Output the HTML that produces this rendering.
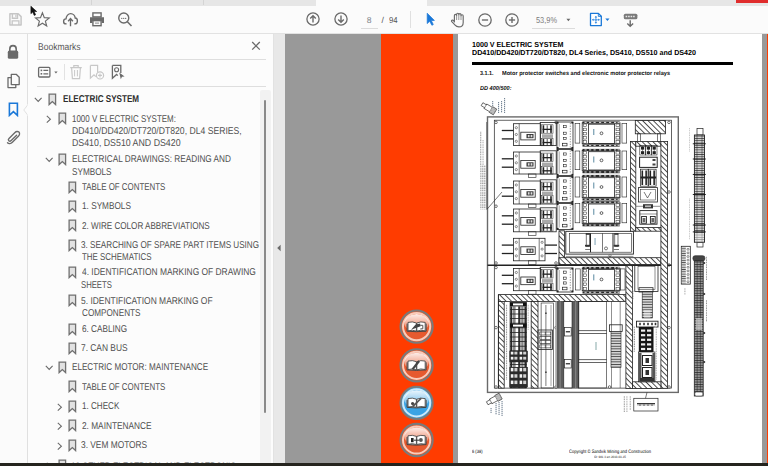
<!DOCTYPE html>
<html><head><meta charset="utf-8"><style>
html,body{margin:0;padding:0;width:768px;height:466px;overflow:hidden;background:#fbfbfb;font-family:"Liberation Sans", sans-serif}
.r,.t,.ic{position:absolute;display:block}
.t{white-space:nowrap;transform-origin:0 0;text-rendering:geometricPrecision}
#bm{position:absolute;left:0;top:87px;width:260px;height:376px;overflow:hidden}
#bmi{position:absolute;left:0;top:-87px}
</style></head><body>
<div class="r" style="left:0;top:0;width:768px;height:5.5px;background:#e6e6e6"></div><div class="r" style="left:91px;top:0;width:1px;height:5px;background:#d4d4d4"></div><div class="r" style="left:203px;top:0;width:1px;height:5px;background:#d4d4d4"></div><div class="r" style="left:316px;top:0;width:111px;height:6px;background:#fbfbfb"></div><div class="r" style="left:736px;top:0;width:32px;height:2.5px;background:#e02c2c"></div><div class="r" style="left:0;top:5.5px;width:768px;height:28px;background:#fbfbfb"></div><div class="r" style="left:0;top:33px;width:768px;height:1px;background:#e2e2e2"></div><svg class="ic" style="left:8px;top:12px" width="15" height="15" viewBox="0 0 15 15"><path d="M1.9 1.7H10.2L13.1 4.6V13.1H1.9Z" fill="none" stroke="#c6c6c6" stroke-width="1.5" stroke-linejoin="round"/><path d="M4.4 1.7V6.3H9.5V1.7" fill="none" stroke="#c6c6c6" stroke-width="1.4"/><rect x="7.3" y="2.6" width="1.2" height="2.6" fill="#c6c6c6"/><path d="M4.2 13.1V8.8H10.9V13.1" fill="none" stroke="#c6c6c6" stroke-width="1.3"/></svg><svg class="ic" style="left:34px;top:11px" width="17" height="17" viewBox="0 0 17 17"><path d="M8.4 1.8L10.3 6.6L15.3 6.9L11.4 10.1L12.7 15.0L8.4 12.3L4.1 15.0L5.4 10.1L1.5 6.9L6.5 6.6Z" fill="none" stroke="#6a6a6a" stroke-width="1.15" stroke-linejoin="miter"/></svg><svg class="ic" style="left:30px;top:5px" width="9" height="12" viewBox="0 0 9 12"><path d="M0.9 1.2L0.9 8.7L2.7 7.0L4.2 10.4L5.6 9.8L4.2 6.5L6.7 6.5Z" fill="#111" stroke="#111" stroke-width="0.6" stroke-linejoin="round"/></svg><svg class="ic" style="left:62px;top:11px" width="17" height="17" viewBox="0 0 17 17"><path d="M4.6 12.9H4.0C2.6 12.9 1.6 11.8 1.6 10.4C1.6 9.0 2.6 7.9 4.0 7.9C4.2 5.0 6.3 2.6 8.7 2.6C11.1 2.6 13.0 4.6 13.2 7.0C14.6 7.1 15.4 8.5 15.4 9.9C15.4 11.5 14.3 12.9 12.8 12.9H12.3" fill="none" stroke="#6a6a6a" stroke-width="1.35"/><path d="M8.5 15.2V7.8M6.1 10.2L8.5 7.6L10.9 10.2" fill="none" stroke="#6a6a6a" stroke-width="1.35"/></svg><svg class="ic" style="left:89px;top:11px" width="16" height="16" viewBox="0 0 16 16"><rect x="3.9" y="1.9" width="8.2" height="4" fill="none" stroke="#6a6a6a" stroke-width="1.4"/><path d="M1 6.2H15V12H12.6V9.9H3.4V12H1Z" fill="#6a6a6a"/><rect x="3.9" y="9.6" width="8.2" height="5.1" fill="#fbfbfb" stroke="#6a6a6a" stroke-width="1.4"/><rect x="6" y="11.4" width="4" height="1.5" fill="#b0b0b0"/></svg><svg class="ic" style="left:116px;top:11px" width="18" height="18" viewBox="0 0 18 18"><circle cx="7.75" cy="7.0" r="5.0" fill="none" stroke="#6a6a6a" stroke-width="1.4"/><path d="M11.4 10.7L15.5 15" stroke="#6a6a6a" stroke-width="1.5"/><circle cx="5.8" cy="7.3" r="0.65" fill="#555"/><circle cx="7.75" cy="7.3" r="0.65" fill="#555"/><circle cx="9.7" cy="7.3" r="0.65" fill="#555"/></svg><svg class="ic" style="left:305.2px;top:11.3px" width="16" height="16" viewBox="0 0 16 16"><circle cx="8" cy="8" r="6.1" fill="none" stroke="#6a6a6a" stroke-width="1.3"/><path d="M8 11.6V4.8M5.2 7.5L8 4.7L10.8 7.5" fill="none" stroke="#6a6a6a" stroke-width="1.4"/></svg><svg class="ic" style="left:332.5px;top:11.3px" width="16" height="16" viewBox="0 0 16 16"><circle cx="8" cy="8" r="6.1" fill="none" stroke="#6a6a6a" stroke-width="1.3"/><path d="M8 4.4V11.2M5.2 8.5L8 11.3L10.8 8.5" fill="none" stroke="#6a6a6a" stroke-width="1.4"/></svg><div class="t" style="left:366.8px;top:14.9px;font-size:8.6px;line-height:10px;color:#7a7f88">8</div><div class="r" style="left:360.5px;top:28px;width:17.5px;height:1px;background:#dcdcdc"></div><div class="t" style="left:381.6px;top:14.9px;font-size:8.6px;line-height:10px;color:#555">/</div><div class="t" style="left:389px;top:14.9px;font-size:8.6px;line-height:10px;color:#555;transform:scaleX(0.9)">94</div><div class="r" style="left:409.5px;top:11px;width:1px;height:16.5px;background:#e0e0e0"></div><svg class="ic" style="left:426px;top:12px" width="10" height="15" viewBox="0 0 10 15"><path d="M1.2 1.2V11.6L3.7 9.3L5.9 13.3L7.3 12.5L5.3 8.6L8.4 8.4Z" fill="#1a78d8" stroke="#1a78d8" stroke-width="0.7" stroke-linejoin="round"/></svg><svg class="ic" style="left:449.5px;top:11.5px" width="16" height="16" viewBox="0 0 16 16"><path d="M4.4 10.0V3.5Q4.4 2.3 5.5 2.3Q6.6 2.3 6.6 3.5V2.4Q6.6 1.2 7.7 1.2Q8.8 1.2 8.8 2.4V2.7Q8.8 1.6 9.9 1.6Q11 1.6 11 2.7V3.7Q11 2.7 12.1 2.7Q13.2 2.7 13.2 3.9V10.4Q13.2 14.9 8.9 14.9Q6.5 14.9 5.1 13.2L1.8 9.7Q1.1 8.9 1.9 8.3Q2.7 7.7 3.5 8.5Z" fill="#fbfbfb" stroke="#6a6a6a" stroke-width="1.15" stroke-linejoin="round"/><path d="M6.6 3.4V8M8.8 2.6V8M11 3.6V8" stroke="#8a8a8a" stroke-width="0.9"/></svg><svg class="ic" style="left:476.5px;top:11.5px" width="16" height="16" viewBox="0 0 16 16"><circle cx="8" cy="8" r="6.2" fill="none" stroke="#6a6a6a" stroke-width="1.3"/><path d="M4.9 8H11.1" stroke="#6a6a6a" stroke-width="1.4"/></svg><svg class="ic" style="left:504.0px;top:11.5px" width="16" height="16" viewBox="0 0 16 16"><circle cx="8" cy="8" r="6.2" fill="none" stroke="#6a6a6a" stroke-width="1.3"/><path d="M4.9 8H11.1" stroke="#6a6a6a" stroke-width="1.4"/><path d="M8 4.9V11.1" stroke="#6a6a6a" stroke-width="1.4"/></svg><div class="t" style="left:536.4px;top:14.9px;font-size:8.6px;line-height:10px;color:#7a7a7a;transform:scaleX(0.86)">53,9%</div><svg class="ic" style="left:566px;top:18px" width="5" height="4" viewBox="0 0 5 4"><path d="M0.4 0.8H4.4L2.4 3.2Z" fill="#6a6a6a"/></svg><div class="r" style="left:532px;top:27.8px;width:43px;height:1px;background:#dcdcdc"></div><svg class="ic" style="left:588.5px;top:11.5px" width="14" height="15" viewBox="0 0 14 15"><path d="M1.5 1.4H9.4L12.3 4.3V13.6H1.5Z" fill="#fff" stroke="#1a78d8" stroke-width="1.3" stroke-linejoin="round"/><path d="M9.3 1.4V4.4H12.3" fill="none" stroke="#1a78d8" stroke-width="0.9"/><path d="M6.9 4.2V11.4M3.3 7.8H10.5" stroke="#5aa0e8" stroke-width="0.9"/><path d="M5.6 5.4L6.9 4L8.2 5.4ZM5.6 10.2L6.9 11.6L8.2 10.2ZM4.5 6.5L3.1 7.8L4.5 9.1ZM9.3 6.5L10.7 7.8L9.3 9.1Z" fill="#1a78d8"/><circle cx="6.9" cy="7.8" r="1.1" fill="#5aa0e8"/></svg><svg class="ic" style="left:604.5px;top:18px" width="5" height="4" viewBox="0 0 5 4"><path d="M0.3 0.6H4.5L2.4 3.0Z" fill="#1a78d8"/></svg><svg class="ic" style="left:622.5px;top:12.5px" width="15" height="15" viewBox="0 0 15 15"><rect x="0.8" y="0.7" width="13.6" height="5.6" rx="1.6" fill="#7a7a7a"/><path d="M2.6 3.5H12.6" stroke="#e8e8e8" stroke-width="1.3" stroke-dasharray="1.6 0.9"/><path d="M7.2 7.2V13.2M4.3 10.6L7.2 13.4L10.1 10.6" fill="none" stroke="#6a6a6a" stroke-width="1.4"/></svg><div class="r" style="left:0;top:34px;width:27px;height:429px;background:#fbfbfb"></div><div class="r" style="left:27px;top:34px;width:1px;height:429px;background:#e0e0e0"></div><svg class="ic" style="left:6px;top:44px" width="14" height="16" viewBox="0 0 14 16"><path d="M3.8 7V4.9C3.8 3.0 5.2 1.6 7 1.6C8.8 1.6 10.2 3.0 10.2 4.9V7" fill="none" stroke="#6a6a6a" stroke-width="1.6"/><rect x="1.8" y="6.6" width="10.4" height="8.2" rx="1.6" fill="#6a6a6a"/></svg><svg class="ic" style="left:6px;top:73px" width="15" height="16" viewBox="0 0 15 16"><path d="M5.3 1.3H10.2L13.2 4.3V11.6H5.3Z" fill="none" stroke="#6a6a6a" stroke-width="1.3" stroke-linejoin="round"/><path d="M5.3 4.6H2.0V14.6H9.8V11.6" fill="none" stroke="#6a6a6a" stroke-width="1.3" stroke-linejoin="round"/></svg><svg class="ic" style="left:8px;top:102px" width="11" height="15" viewBox="0 0 11 15"><path d="M1.4 1.3H9.4V13.4L5.4 9.7L1.4 13.4Z" fill="none" stroke="#1a78d8" stroke-width="1.6" stroke-linejoin="miter"/></svg><svg class="ic" style="left:23px;top:104px" width="6" height="12" viewBox="0 0 6 12"><path d="M5 0.5L0.8 6L5 11.5" fill="#fcfcfc" stroke="#dedede" stroke-width="0.9"/><rect x="4.6" y="0" width="2" height="12" fill="#fcfcfc"/></svg><svg class="ic" style="left:6px;top:130px" width="15" height="15" viewBox="0 0 15 15"><path d="M10.6 5.2L5.2 10.6C4.4 11.4 3.4 11.4 2.8 10.8C2.2 10.2 2.2 9.2 3.0 8.4L9.0 2.4C10.2 1.2 12.0 1.2 12.9 2.1C13.8 3.0 13.8 4.8 12.6 6.0L6.4 12.2C4.8 13.8 2.6 13.9 1.5 12.8" fill="none" stroke="#6a6a6a" stroke-width="1.35" stroke-linecap="round"/></svg><div class="r" style="left:28px;top:34px;width:245px;height:429px;background:#fcfcfc"></div><div class="t" style="left:37.5px;top:41.6px;font-size:9.8px;line-height:11px;color:#585858;transform:scaleX(0.87)">Bookmarks</div><svg class="ic" style="left:250px;top:40px" width="12" height="12" viewBox="0 0 12 12"><path d="M2.2 2.0L9.8 9.6M9.8 2.0L2.2 9.6" stroke="#6a6a6a" stroke-width="1.3"/></svg><div class="r" style="left:37px;top:59px;width:229px;height:1px;background:#dedede"></div><div class="r" style="left:37px;top:86px;width:229px;height:1px;background:#dedede"></div><svg class="ic" style="left:37px;top:66px" width="22" height="13" viewBox="0 0 22 13"><rect x="1.6" y="1.4" width="11.3" height="9.6" rx="1" fill="none" stroke="#6a6a6a" stroke-width="1.3"/><rect x="3.6" y="3.6" width="1.6" height="1.6" fill="#6a6a6a"/><rect x="3.6" y="7.0" width="1.6" height="1.6" fill="#6a6a6a"/><path d="M6.4 4.4H11.2M6.4 7.8H11.2" stroke="#6a6a6a" stroke-width="1.2"/><path d="M17.3 5.5H20.6L18.95 7.6Z" fill="#6a6a6a"/></svg><div class="r" style="left:63.5px;top:64px;width:1px;height:16px;background:#e2e2e2"></div><svg class="ic" style="left:69px;top:64px" width="14" height="16" viewBox="0 0 14 16"><path d="M1.2 3.6H12.8M4.8 3.4V1.6H9.2V3.4" fill="none" stroke="#c8c8c8" stroke-width="1.2"/><path d="M2.6 3.8L3.4 14.6H10.6L11.4 3.8" fill="none" stroke="#c8c8c8" stroke-width="1.2"/><path d="M5.6 6V12.4M8.4 6V12.4" stroke="#c8c8c8" stroke-width="1"/></svg><svg class="ic" style="left:89px;top:64px" width="16" height="16" viewBox="0 0 16 16"><path d="M1.4 1.4H8.6V8.4M1.4 1.4V14.2L5.0 10.8L6.8 12.6" fill="none" stroke="#c8c8c8" stroke-width="1.2"/><circle cx="11" cy="11.4" r="3.6" fill="#fcfcfc" stroke="#c8c8c8" stroke-width="1.2"/><path d="M11 9.4V13.4M9 11.4H13" stroke="#c8c8c8" stroke-width="1.1"/></svg><svg class="ic" style="left:111px;top:64px" width="15" height="16" viewBox="0 0 15 16"><path d="M1.4 1.4H9.8V9M1.4 1.4V14.2L5.6 10.4L6.8 11.6" fill="none" stroke="#6a6a6a" stroke-width="1.3"/><circle cx="5.6" cy="5.8" r="2" fill="none" stroke="#6a6a6a" stroke-width="1.1"/><path d="M8.2 8.6L13.6 12.6L11.0 12.8L9.8 15.2Z" fill="#6a6a6a"/></svg><div class="r" style="left:260px;top:89.5px;width:11px;height:373.5px;background:#f2f2f2;border-radius:2px 2px 0 0"></div><div class="r" style="left:263.6px;top:100px;width:2.4px;height:313px;background:#8a8a8a;border-radius:1px"></div><div class="r" style="left:273px;top:34px;width:12px;height:429px;background:#e8e8e8"></div><div class="r" style="left:273px;top:34px;width:1px;height:429px;background:#e2e2e2"></div><svg class="ic" style="left:276px;top:244px" width="6" height="8" viewBox="0 0 6 8"><path d="M4.6 0.8L1.2 4L4.6 7.2Z" fill="#6a6a6a"/></svg><div class="r" style="left:285px;top:34px;width:96px;height:429px;background:#999"></div><div class="r" style="left:381px;top:34px;width:72px;height:429px;background:#ff3c00"></div><div class="r" style="left:453px;top:34px;width:4.5px;height:429px;background:#999"></div><div class="r" style="left:457.5px;top:34px;width:304.5px;height:429px;background:#fff"></div><div class="r" style="left:762px;top:34px;width:5px;height:429px;background:#999"></div><div class="r" style="left:767px;top:34px;width:1px;height:429px;background:#ff3c00"></div><div class="r" style="left:0;top:463px;width:768px;height:3px;background:#25241e"></div>
<div id="bm"><div id="bmi"><svg class="ic" style="left:34.4px;top:97.1px" width="9" height="6" viewBox="0 0 9 6"><path d="M0.8 0.8L4.2 4.4L7.6 0.8" fill="none" stroke="#6a6a6a" stroke-width="1.1"/></svg><svg class="ic" style="left:47.6px;top:93.0px" width="9" height="13" viewBox="0 0 9 13"><path d="M1.1 1.1H7.6V11.6L4.35 8.6L1.1 11.6Z" fill="#e2e2e2" stroke="#707070" stroke-width="1.3" stroke-linejoin="miter"/></svg><div class="t" style="left:62.80px;top:94.44px;font-size:9.9px;line-height:11.058px;color:#2e2e2e;font-weight:bold;font-style:normal;transform:scale(0.8207,1.0);">ELECTRIC SYSTEM</div><svg class="ic" style="left:46.0px;top:115.2px" width="6" height="9" viewBox="0 0 6 9"><path d="M0.8 0.8L4.4 4.2L0.8 7.6" fill="none" stroke="#6a6a6a" stroke-width="1.1"/></svg><svg class="ic" style="left:57.6px;top:112.2px" width="9" height="13" viewBox="0 0 9 13"><path d="M1.1 1.1H7.6V11.6L4.35 8.6L1.1 11.6Z" fill="#e2e2e2" stroke="#707070" stroke-width="1.3" stroke-linejoin="miter"/></svg><div class="t" style="left:71.50px;top:113.64px;font-size:9.9px;line-height:11.058px;color:#505050;font-weight:normal;font-style:normal;transform:scale(0.8059,1.0);">1000 V ELECTRIC SYSTEM:</div><div class="t" style="left:71.50px;top:126.04px;font-size:9.9px;line-height:11.058px;color:#505050;font-weight:normal;font-style:normal;transform:scale(0.8734,1.0);">DD410/DD420/DT720/DT820, DL4 SERIES,</div><div class="t" style="left:71.50px;top:138.44px;font-size:9.9px;line-height:11.058px;color:#505050;font-weight:normal;font-style:normal;transform:scale(0.8905,1.0);">DS410, DS510 AND DS420</div><svg class="ic" style="left:45.0px;top:157.0px" width="9" height="6" viewBox="0 0 9 6"><path d="M0.8 0.8L4.2 4.4L7.6 0.8" fill="none" stroke="#6a6a6a" stroke-width="1.1"/></svg><svg class="ic" style="left:57.6px;top:152.9px" width="9" height="13" viewBox="0 0 9 13"><path d="M1.1 1.1H7.6V11.6L4.35 8.6L1.1 11.6Z" fill="#e2e2e2" stroke="#707070" stroke-width="1.3" stroke-linejoin="miter"/></svg><div class="t" style="left:71.50px;top:154.34px;font-size:9.9px;line-height:11.058px;color:#505050;font-weight:normal;font-style:normal;transform:scale(0.8333,1.0);">ELECTRICAL DRAWINGS: READING AND</div><div class="t" style="left:71.50px;top:166.74px;font-size:9.9px;line-height:11.058px;color:#505050;font-weight:normal;font-style:normal;transform:scale(0.8280,1.0);">SYMBOLS</div><svg class="ic" style="left:67.6px;top:180.7px" width="9" height="13" viewBox="0 0 9 13"><path d="M1.1 1.1H7.6V11.6L4.35 8.6L1.1 11.6Z" fill="#e2e2e2" stroke="#707070" stroke-width="1.3" stroke-linejoin="miter"/></svg><div class="t" style="left:82.40px;top:182.14px;font-size:9.9px;line-height:11.058px;color:#505050;font-weight:normal;font-style:normal;transform:scale(0.8004,1.0);">TABLE OF CONTENTS</div><svg class="ic" style="left:67.6px;top:199.9px" width="9" height="13" viewBox="0 0 9 13"><path d="M1.1 1.1H7.6V11.6L4.35 8.6L1.1 11.6Z" fill="#e2e2e2" stroke="#707070" stroke-width="1.3" stroke-linejoin="miter"/></svg><div class="t" style="left:81.60px;top:201.34px;font-size:9.9px;line-height:11.058px;color:#505050;font-weight:normal;font-style:normal;transform:scale(0.8326,1.0);">1. SYMBOLS</div><svg class="ic" style="left:67.6px;top:219.2px" width="9" height="13" viewBox="0 0 9 13"><path d="M1.1 1.1H7.6V11.6L4.35 8.6L1.1 11.6Z" fill="#e2e2e2" stroke="#707070" stroke-width="1.3" stroke-linejoin="miter"/></svg><div class="t" style="left:82.40px;top:220.59px;font-size:9.9px;line-height:11.058px;color:#505050;font-weight:normal;font-style:normal;transform:scale(0.8207,1.0);">2. WIRE COLOR ABBREVIATIONS</div><svg class="ic" style="left:67.6px;top:238.5px" width="9" height="13" viewBox="0 0 9 13"><path d="M1.1 1.1H7.6V11.6L4.35 8.6L1.1 11.6Z" fill="#e2e2e2" stroke="#707070" stroke-width="1.3" stroke-linejoin="miter"/></svg><div class="t" style="left:81.20px;top:239.94px;font-size:9.9px;line-height:11.058px;color:#505050;font-weight:normal;font-style:normal;transform:scale(0.8221,1.0);">3. SEARCHING OF SPARE PART ITEMS USING</div><div class="t" style="left:82.40px;top:252.34px;font-size:9.9px;line-height:11.058px;color:#505050;font-weight:normal;font-style:normal;transform:scale(0.8030,1.0);">THE SCHEMATICS</div><svg class="ic" style="left:67.6px;top:266.0px" width="9" height="13" viewBox="0 0 9 13"><path d="M1.1 1.1H7.6V11.6L4.35 8.6L1.1 11.6Z" fill="#e2e2e2" stroke="#707070" stroke-width="1.3" stroke-linejoin="miter"/></svg><div class="t" style="left:82.40px;top:267.44px;font-size:9.9px;line-height:11.058px;color:#505050;font-weight:normal;font-style:normal;transform:scale(0.8520,1.0);">4. IDENTIFICATION MARKING OF DRAWING</div><div class="t" style="left:81.40px;top:279.84px;font-size:9.9px;line-height:11.058px;color:#505050;font-weight:normal;font-style:normal;transform:scale(0.7813,1.0);">SHEETS</div><svg class="ic" style="left:67.6px;top:294.1px" width="9" height="13" viewBox="0 0 9 13"><path d="M1.1 1.1H7.6V11.6L4.35 8.6L1.1 11.6Z" fill="#e2e2e2" stroke="#707070" stroke-width="1.3" stroke-linejoin="miter"/></svg><div class="t" style="left:81.40px;top:295.59px;font-size:9.9px;line-height:11.058px;color:#505050;font-weight:normal;font-style:normal;transform:scale(0.8542,1.0);">5. IDENTIFICATION MARKING OF</div><div class="t" style="left:82.40px;top:307.99px;font-size:9.9px;line-height:11.058px;color:#505050;font-weight:normal;font-style:normal;transform:scale(0.8275,1.0);">COMPONENTS</div><svg class="ic" style="left:67.6px;top:322.6px" width="9" height="13" viewBox="0 0 9 13"><path d="M1.1 1.1H7.6V11.6L4.35 8.6L1.1 11.6Z" fill="#e2e2e2" stroke="#707070" stroke-width="1.3" stroke-linejoin="miter"/></svg><div class="t" style="left:82.40px;top:324.04px;font-size:9.9px;line-height:11.058px;color:#505050;font-weight:normal;font-style:normal;transform:scale(0.8298,1.0);">6. CABLING</div><svg class="ic" style="left:67.6px;top:341.6px" width="9" height="13" viewBox="0 0 9 13"><path d="M1.1 1.1H7.6V11.6L4.35 8.6L1.1 11.6Z" fill="#e2e2e2" stroke="#707070" stroke-width="1.3" stroke-linejoin="miter"/></svg><div class="t" style="left:81.40px;top:343.09px;font-size:9.9px;line-height:11.058px;color:#505050;font-weight:normal;font-style:normal;transform:scale(0.8485,1.0);">7. CAN BUS</div><svg class="ic" style="left:45.0px;top:365.1px" width="9" height="6" viewBox="0 0 9 6"><path d="M0.8 0.8L4.2 4.4L7.6 0.8" fill="none" stroke="#6a6a6a" stroke-width="1.1"/></svg><svg class="ic" style="left:57.6px;top:361.0px" width="9" height="13" viewBox="0 0 9 13"><path d="M1.1 1.1H7.6V11.6L4.35 8.6L1.1 11.6Z" fill="#e2e2e2" stroke="#707070" stroke-width="1.3" stroke-linejoin="miter"/></svg><div class="t" style="left:71.50px;top:362.44px;font-size:9.9px;line-height:11.058px;color:#505050;font-weight:normal;font-style:normal;transform:scale(0.8223,1.0);">ELECTRIC MOTOR: MAINTENANCE</div><svg class="ic" style="left:67.6px;top:380.4px" width="9" height="13" viewBox="0 0 9 13"><path d="M1.1 1.1H7.6V11.6L4.35 8.6L1.1 11.6Z" fill="#e2e2e2" stroke="#707070" stroke-width="1.3" stroke-linejoin="miter"/></svg><div class="t" style="left:82.40px;top:381.84px;font-size:9.9px;line-height:11.058px;color:#505050;font-weight:normal;font-style:normal;transform:scale(0.8004,1.0);">TABLE OF CONTENTS</div><svg class="ic" style="left:56.5px;top:402.8px" width="6" height="9" viewBox="0 0 6 9"><path d="M0.8 0.8L4.4 4.2L0.8 7.6" fill="none" stroke="#6a6a6a" stroke-width="1.1"/></svg><svg class="ic" style="left:67.6px;top:399.8px" width="9" height="13" viewBox="0 0 9 13"><path d="M1.1 1.1H7.6V11.6L4.35 8.6L1.1 11.6Z" fill="#e2e2e2" stroke="#707070" stroke-width="1.3" stroke-linejoin="miter"/></svg><div class="t" style="left:82.40px;top:401.24px;font-size:9.9px;line-height:11.058px;color:#505050;font-weight:normal;font-style:normal;transform:scale(0.8186,1.0);">1. CHECK</div><svg class="ic" style="left:56.5px;top:422.4px" width="6" height="9" viewBox="0 0 6 9"><path d="M0.8 0.8L4.4 4.2L0.8 7.6" fill="none" stroke="#6a6a6a" stroke-width="1.1"/></svg><svg class="ic" style="left:67.6px;top:419.4px" width="9" height="13" viewBox="0 0 9 13"><path d="M1.1 1.1H7.6V11.6L4.35 8.6L1.1 11.6Z" fill="#e2e2e2" stroke="#707070" stroke-width="1.3" stroke-linejoin="miter"/></svg><div class="t" style="left:82.40px;top:420.84px;font-size:9.9px;line-height:11.058px;color:#505050;font-weight:normal;font-style:normal;transform:scale(0.8386,1.0);">2. MAINTENANCE</div><svg class="ic" style="left:56.5px;top:441.5px" width="6" height="9" viewBox="0 0 6 9"><path d="M0.8 0.8L4.4 4.2L0.8 7.6" fill="none" stroke="#6a6a6a" stroke-width="1.1"/></svg><svg class="ic" style="left:67.6px;top:438.5px" width="9" height="13" viewBox="0 0 9 13"><path d="M1.1 1.1H7.6V11.6L4.35 8.6L1.1 11.6Z" fill="#e2e2e2" stroke="#707070" stroke-width="1.3" stroke-linejoin="miter"/></svg><div class="t" style="left:81.40px;top:439.94px;font-size:9.9px;line-height:11.058px;color:#505050;font-weight:normal;font-style:normal;transform:scale(0.8453,1.0);">3. VEM MOTORS</div><svg class="ic" style="left:46.0px;top:461.7px" width="6" height="9" viewBox="0 0 6 9"><path d="M0.8 0.8L4.4 4.2L0.8 7.6" fill="none" stroke="#6a6a6a" stroke-width="1.1"/></svg><svg class="ic" style="left:57.6px;top:458.7px" width="9" height="13" viewBox="0 0 9 13"><path d="M1.1 1.1H7.6V11.6L4.35 8.6L1.1 11.6Z" fill="#e2e2e2" stroke="#707070" stroke-width="1.3" stroke-linejoin="miter"/></svg><div class="t" style="left:71.40px;top:460.68px;font-size:9.3px;line-height:10.388px;color:#505050;font-weight:normal;font-style:normal;transform:scale(0.8730,1.0);">10 OTHER ELECTRICAL AND ELECTRONIC</div></div></div>
<div class="t" style="left:472.3px;top:40.99px;font-size:7.3px;line-height:8.154px;color:#000;font-weight:bold;font-style:normal;transform:scaleX(0.9768)">1000 V ELECTRIC SYSTEM</div><div class="t" style="left:472.3px;top:49.19px;font-size:7.3px;line-height:8.154px;color:#000;font-weight:bold;font-style:normal;transform:scaleX(0.9774)">DD410/DD420/DT720/DT820, DL4 Series, DS410, DS510 and DS420</div><div class="t" style="left:479.6px;top:71.16px;font-size:5.9px;line-height:6.590px;color:#111;font-weight:bold;font-style:normal;transform:scaleX(0.9220)">3.1.1.</div><div class="t" style="left:501.5px;top:71.16px;font-size:5.9px;line-height:6.590px;color:#111;font-weight:bold;font-style:normal;transform:scaleX(0.9522)">Motor protector switches and electronic motor protector relays</div><div class="t" style="left:479.6px;top:86.36px;font-size:5.9px;line-height:6.590px;color:#111;font-weight:bold;font-style:italic;transform:scaleX(0.9429)">DD 400/500:</div><div class="t" style="left:472.4px;top:449.86px;font-size:4.8px;line-height:5.362px;color:#000;font-weight:normal;font-style:normal;transform:scaleX(0.8379)">6 (38)</div><div class="t" style="left:568.7px;top:449.57px;font-size:4.9px;line-height:5.473px;color:#000;font-weight:normal;font-style:normal;transform:scaleX(0.8304)">Copyright &#169; Sandvik Mining and Construction</div><div class="t" style="left:593.5px;top:455.60px;font-size:3.2px;line-height:3.574px;color:#222;font-weight:normal;font-style:normal;transform:scaleX(0.9259)">ID: 981 3 en 2010-03-15</div><div class="r" style="left:472px;top:61.8px;width:261px;height:2.8px;background:#000"></div><svg class="ic" style="left:0;top:0" width="768" height="466" viewBox="0 0 768 466"><defs><pattern id="hatch" patternUnits="userSpaceOnUse" width="3.8" height="3.8" patternTransform="rotate(-45)"><rect width="3.8" height="3.8" fill="#fff"/><rect x="0" y="0" width="0.85" height="3.8" fill="#333"/></pattern><pattern id="dots" patternUnits="userSpaceOnUse" width="2" height="2.4"><rect width="2" height="2.4" fill="#fff"/><rect x="0.2" y="0.3" width="1.2" height="1.4" fill="#666"/></pattern><pattern id="term" patternUnits="userSpaceOnUse" width="4" height="2.6"><rect width="4" height="2.6" fill="#d8d8d8"/><rect x="0" y="0" width="4" height="0.9" fill="#444"/></pattern><pattern id="termd" patternUnits="userSpaceOnUse" width="4" height="3.6"><rect width="4" height="3.6" fill="#999"/><rect x="0" y="0" width="4" height="0.9" fill="#222"/><rect x="1.2" y="1.3" width="1.6" height="1.6" fill="#eee"/></pattern><pattern id="ladder" patternUnits="userSpaceOnUse" width="4" height="2.3"><rect width="4" height="2.3" fill="#d4d4d4"/><rect x="0" y="0" width="4" height="0.8" fill="#4a4a4a"/></pattern><pattern id="ladder2" patternUnits="userSpaceOnUse" width="4" height="2.4"><rect width="4" height="2.4" fill="#9a9a9a"/><rect x="0" y="0" width="4" height="0.9" fill="#3a3a3a"/></pattern></defs><rect x="487.5" y="116.9" width="190.80" height="275.50" fill="none" stroke="#6a6a6a" stroke-width="1.4"/><rect x="494.3" y="120.2" width="177.20" height="267.90" fill="none" stroke="#222" stroke-width="0.7"/><line x1="486.6" y1="122" x2="486.6" y2="209.4" stroke="#222" stroke-width="0.5"/><circle cx="496" cy="122.4" r="1.3" fill="#fff" stroke="#222" stroke-width="0.6"/><circle cx="556" cy="122.4" r="1.3" fill="#fff" stroke="#222" stroke-width="0.6"/><circle cx="669" cy="122.4" r="1.3" fill="#fff" stroke="#222" stroke-width="0.6"/><circle cx="496" cy="263" r="1.3" fill="#fff" stroke="#222" stroke-width="0.6"/><circle cx="496" cy="267.5" r="1.3" fill="#fff" stroke="#222" stroke-width="0.6"/><circle cx="556" cy="263" r="1.3" fill="#fff" stroke="#222" stroke-width="0.6"/><circle cx="556" cy="267.5" r="1.3" fill="#fff" stroke="#222" stroke-width="0.6"/><circle cx="669" cy="192" r="1.3" fill="#fff" stroke="#222" stroke-width="0.6"/><circle cx="669" cy="265" r="1.3" fill="#fff" stroke="#222" stroke-width="0.6"/><circle cx="669" cy="327.6" r="1.3" fill="#fff" stroke="#222" stroke-width="0.6"/><circle cx="496" cy="327.6" r="1.3" fill="#fff" stroke="#222" stroke-width="0.6"/><circle cx="556" cy="327.6" r="1.3" fill="#fff" stroke="#222" stroke-width="0.6"/><circle cx="496" cy="387" r="1.3" fill="#fff" stroke="#222" stroke-width="0.6"/><circle cx="556" cy="387" r="1.3" fill="#fff" stroke="#222" stroke-width="0.6"/><circle cx="609.6" cy="387" r="1.3" fill="#fff" stroke="#222" stroke-width="0.6"/><circle cx="669" cy="387" r="1.3" fill="#fff" stroke="#222" stroke-width="0.6"/><rect x="480.2" y="131" width="1.3" height="34" fill="url(#dots)" opacity="0.9"/><rect x="482.6" y="140" width="1.3" height="25" fill="url(#dots)" opacity="0.9"/><rect x="480.2" y="165" width="5.80" height="44.40" fill="url(#dots)"/><rect x="480.2" y="165" width="5.80" height="44.40" fill="#fff" opacity="0.25"/><line x1="486.9" y1="209.4" x2="502" y2="192" stroke="#222" stroke-width="0.6"/><circle cx="496" cy="206.2" r="1.3" fill="#fff" stroke="#222" stroke-width="0.6"/><g transform="translate(489.4,108.6) rotate(31)"><path d="M-8.6 -1.7H-4.6V-2.6H1.8V-3.3H6.6V3.3H1.8V2.6H-4.6V1.7H-8.6Z" fill="#fff" stroke="#333" stroke-width="0.65"/><path d="M-4.6 -2.6V2.6M1.8 -2.6V2.6" stroke="#333" stroke-width="0.5"/><path d="M2.8 -3.3V3.3M3.8 -3.3V3.3M4.8 -3.3V3.3M5.8 -3.3V3.3" stroke="#555" stroke-width="0.45"/></g><line x1="492.70" y1="101.0" x2="492.70" y2="106.0" stroke="#4f6378" stroke-width="1.0" stroke-dasharray="1.3 0.7" opacity="0.85"/><line x1="498.60" y1="102.0" x2="498.60" y2="113.0" stroke="#4f6378" stroke-width="1.0" stroke-dasharray="1.3 0.7" opacity="0.85"/><line x1="501.60" y1="101.0" x2="501.60" y2="113.0" stroke="#4f6378" stroke-width="1.0" stroke-dasharray="1.3 0.7" opacity="0.85"/><line x1="504.60" y1="98.0" x2="504.60" y2="113.0" stroke="#4f6378" stroke-width="1.0" stroke-dasharray="1.3 0.7" opacity="0.85"/><rect x="513.4" y="123.7" width="27.00" height="21.90" fill="none" stroke="#222" stroke-width="0.8"/><line x1="519.2" y1="123.7" x2="519.2" y2="145.6" stroke="#222" stroke-width="0.6"/><circle cx="516.3" cy="127.7" r="1.1" fill="#fff" stroke="#222" stroke-width="0.5"/><circle cx="516.3" cy="134.5" r="1.1" fill="#fff" stroke="#222" stroke-width="0.5"/><circle cx="516.3" cy="141.3" r="1.1" fill="#fff" stroke="#222" stroke-width="0.5"/><rect x="520.8" y="132.2" width="14.40" height="7.70" fill="none" stroke="#222" stroke-width="0.8"/><rect x="526.5" y="134.0" width="7.00" height="4.20" fill="#333"/><rect x="527.8" y="134.9" width="1.80" height="2.40" fill="#ddd"/><rect x="530.6" y="134.9" width="1.80" height="2.40" fill="#ddd"/><line x1="501.8" y1="130.5" x2="513.4" y2="130.5" stroke="#222" stroke-width="1.3"/><line x1="501.8" y1="138.9" x2="513.4" y2="138.9" stroke="#222" stroke-width="1.3"/><rect x="540.2" y="122.5" width="16.00" height="23.10" fill="none" stroke="#222" stroke-width="0.8"/><rect x="542.6" y="125.3" width="1.60" height="7.60" fill="#222"/><rect x="550.2" y="125.3" width="1.60" height="7.60" fill="#222"/><rect x="542.6" y="128.72" width="9.20" height="1.30" fill="#222"/><line x1="547.2" y1="125.3" x2="547.2" y2="132.9" stroke="#222" stroke-width="0.8"/><rect x="541.5" y="124.8" width="11.50" height="8.40" fill="none" stroke="#222" stroke-width="0.5"/><rect x="542.6" y="138.9" width="1.60" height="6.60" fill="#222"/><rect x="550.2" y="138.9" width="1.60" height="6.60" fill="#222"/><rect x="542.6" y="141.87" width="9.20" height="1.30" fill="#222"/><line x1="547.2" y1="138.9" x2="547.2" y2="145.5" stroke="#222" stroke-width="0.8"/><rect x="541.5" y="138.4" width="11.50" height="7.40" fill="none" stroke="#222" stroke-width="0.5"/><rect x="542" y="134.3" width="11.00" height="3.60" fill="#aaa"/><rect x="513.4" y="152.0" width="27.00" height="22.00" fill="none" stroke="#222" stroke-width="0.8"/><line x1="519.2" y1="152.0" x2="519.2" y2="174.0" stroke="#222" stroke-width="0.6"/><circle cx="516.3" cy="156.0" r="1.1" fill="#fff" stroke="#222" stroke-width="0.5"/><circle cx="516.3" cy="162.8" r="1.1" fill="#fff" stroke="#222" stroke-width="0.5"/><circle cx="516.3" cy="169.6" r="1.1" fill="#fff" stroke="#222" stroke-width="0.5"/><rect x="520.8" y="160.5" width="14.40" height="7.70" fill="none" stroke="#222" stroke-width="0.8"/><rect x="526.5" y="162.3" width="7.00" height="4.20" fill="#333"/><rect x="527.8" y="163.2" width="1.80" height="2.40" fill="#ddd"/><rect x="530.6" y="163.2" width="1.80" height="2.40" fill="#ddd"/><line x1="501.8" y1="158.8" x2="513.4" y2="158.8" stroke="#222" stroke-width="1.3"/><line x1="501.8" y1="167.2" x2="513.4" y2="167.2" stroke="#222" stroke-width="1.3"/><rect x="528.3" y="174.0" width="7.70" height="3.50" fill="none" stroke="#222" stroke-width="0.6"/><rect x="540.2" y="150.8" width="16.00" height="23.20" fill="none" stroke="#222" stroke-width="0.8"/><rect x="542.6" y="153.6" width="1.60" height="7.60" fill="#222"/><rect x="550.2" y="153.6" width="1.60" height="7.60" fill="#222"/><rect x="542.6" y="157.01999999999998" width="9.20" height="1.30" fill="#222"/><line x1="547.2" y1="153.6" x2="547.2" y2="161.2" stroke="#222" stroke-width="0.8"/><rect x="541.5" y="153.1" width="11.50" height="8.40" fill="none" stroke="#222" stroke-width="0.5"/><rect x="542.6" y="167.2" width="1.60" height="6.60" fill="#222"/><rect x="550.2" y="167.2" width="1.60" height="6.60" fill="#222"/><rect x="542.6" y="170.17" width="9.20" height="1.30" fill="#222"/><line x1="547.2" y1="167.2" x2="547.2" y2="173.79999999999998" stroke="#222" stroke-width="0.8"/><rect x="541.5" y="166.7" width="11.50" height="7.40" fill="none" stroke="#222" stroke-width="0.5"/><rect x="542" y="162.6" width="11.00" height="3.60" fill="#aaa"/><rect x="513.4" y="181.0" width="27.00" height="23.00" fill="none" stroke="#222" stroke-width="0.8"/><line x1="519.2" y1="181.0" x2="519.2" y2="204.0" stroke="#222" stroke-width="0.6"/><circle cx="516.3" cy="185.0" r="1.1" fill="#fff" stroke="#222" stroke-width="0.5"/><circle cx="516.3" cy="191.8" r="1.1" fill="#fff" stroke="#222" stroke-width="0.5"/><circle cx="516.3" cy="198.6" r="1.1" fill="#fff" stroke="#222" stroke-width="0.5"/><rect x="520.8" y="189.5" width="14.40" height="7.70" fill="none" stroke="#222" stroke-width="0.8"/><rect x="526.5" y="191.3" width="7.00" height="4.20" fill="#333"/><rect x="527.8" y="192.2" width="1.80" height="2.40" fill="#ddd"/><rect x="530.6" y="192.2" width="1.80" height="2.40" fill="#ddd"/><line x1="501.8" y1="187.8" x2="513.4" y2="187.8" stroke="#222" stroke-width="1.3"/><line x1="501.8" y1="196.2" x2="513.4" y2="196.2" stroke="#222" stroke-width="1.3"/><rect x="528.3" y="204.0" width="7.70" height="3.50" fill="none" stroke="#222" stroke-width="0.6"/><rect x="540.2" y="179.8" width="16.00" height="24.20" fill="none" stroke="#222" stroke-width="0.8"/><rect x="542.6" y="182.6" width="1.60" height="7.60" fill="#222"/><rect x="550.2" y="182.6" width="1.60" height="7.60" fill="#222"/><rect x="542.6" y="186.01999999999998" width="9.20" height="1.30" fill="#222"/><line x1="547.2" y1="182.6" x2="547.2" y2="190.2" stroke="#222" stroke-width="0.8"/><rect x="541.5" y="182.1" width="11.50" height="8.40" fill="none" stroke="#222" stroke-width="0.5"/><rect x="542.6" y="196.2" width="1.60" height="6.60" fill="#222"/><rect x="550.2" y="196.2" width="1.60" height="6.60" fill="#222"/><rect x="542.6" y="199.17" width="9.20" height="1.30" fill="#222"/><line x1="547.2" y1="196.2" x2="547.2" y2="202.79999999999998" stroke="#222" stroke-width="0.8"/><rect x="541.5" y="195.7" width="11.50" height="7.40" fill="none" stroke="#222" stroke-width="0.5"/><rect x="542" y="191.6" width="11.00" height="3.60" fill="#aaa"/><rect x="513.4" y="209.0" width="27.00" height="22.80" fill="none" stroke="#222" stroke-width="0.8"/><line x1="519.2" y1="209.0" x2="519.2" y2="231.8" stroke="#222" stroke-width="0.6"/><circle cx="516.3" cy="213.0" r="1.1" fill="#fff" stroke="#222" stroke-width="0.5"/><circle cx="516.3" cy="219.8" r="1.1" fill="#fff" stroke="#222" stroke-width="0.5"/><circle cx="516.3" cy="226.6" r="1.1" fill="#fff" stroke="#222" stroke-width="0.5"/><rect x="520.8" y="217.5" width="14.40" height="7.70" fill="none" stroke="#222" stroke-width="0.8"/><rect x="526.5" y="219.3" width="7.00" height="4.20" fill="#333"/><rect x="527.8" y="220.2" width="1.80" height="2.40" fill="#ddd"/><rect x="530.6" y="220.2" width="1.80" height="2.40" fill="#ddd"/><line x1="501.8" y1="215.8" x2="513.4" y2="215.8" stroke="#222" stroke-width="1.3"/><line x1="501.8" y1="224.2" x2="513.4" y2="224.2" stroke="#222" stroke-width="1.3"/><rect x="528.3" y="231.8" width="7.70" height="3.50" fill="none" stroke="#222" stroke-width="0.6"/><rect x="540.2" y="207.8" width="16.00" height="24.00" fill="none" stroke="#222" stroke-width="0.8"/><rect x="542.6" y="210.6" width="1.60" height="7.60" fill="#222"/><rect x="550.2" y="210.6" width="1.60" height="7.60" fill="#222"/><rect x="542.6" y="214.01999999999998" width="9.20" height="1.30" fill="#222"/><line x1="547.2" y1="210.6" x2="547.2" y2="218.2" stroke="#222" stroke-width="0.8"/><rect x="541.5" y="210.1" width="11.50" height="8.40" fill="none" stroke="#222" stroke-width="0.5"/><rect x="542.6" y="224.2" width="1.60" height="6.60" fill="#222"/><rect x="550.2" y="224.2" width="1.60" height="6.60" fill="#222"/><rect x="542.6" y="227.17" width="9.20" height="1.30" fill="#222"/><line x1="547.2" y1="224.2" x2="547.2" y2="230.79999999999998" stroke="#222" stroke-width="0.8"/><rect x="541.5" y="223.7" width="11.50" height="7.40" fill="none" stroke="#222" stroke-width="0.5"/><rect x="542" y="219.6" width="11.00" height="3.60" fill="#aaa"/><rect x="513.4" y="238.3" width="31.60" height="22.50" fill="none" stroke="#222" stroke-width="0.8"/><line x1="519.2" y1="238.3" x2="519.2" y2="260.8" stroke="#222" stroke-width="0.6"/><circle cx="516.3" cy="242.3" r="1.1" fill="#fff" stroke="#222" stroke-width="0.5"/><circle cx="516.3" cy="249.10000000000002" r="1.1" fill="#fff" stroke="#222" stroke-width="0.5"/><circle cx="516.3" cy="255.9" r="1.1" fill="#fff" stroke="#222" stroke-width="0.5"/><rect x="520.8" y="246.8" width="14.40" height="7.70" fill="none" stroke="#222" stroke-width="0.8"/><rect x="526.5" y="248.60000000000002" width="7.00" height="4.20" fill="#333"/><rect x="527.8" y="249.5" width="1.80" height="2.40" fill="#ddd"/><rect x="530.6" y="249.5" width="1.80" height="2.40" fill="#ddd"/><line x1="501.8" y1="245.10000000000002" x2="513.4" y2="245.10000000000002" stroke="#222" stroke-width="1.3"/><line x1="501.8" y1="253.5" x2="513.4" y2="253.5" stroke="#222" stroke-width="1.3"/><line x1="539.2" y1="238.3" x2="539.2" y2="260.8" stroke="#222" stroke-width="0.6"/><circle cx="542.1" cy="242.3" r="1.1" fill="#fff" stroke="#222" stroke-width="0.5"/><circle cx="542.1" cy="249.10000000000002" r="1.1" fill="#fff" stroke="#222" stroke-width="0.5"/><circle cx="542.1" cy="255.9" r="1.1" fill="#fff" stroke="#222" stroke-width="0.5"/><line x1="545" y1="245.10000000000002" x2="557" y2="245.10000000000002" stroke="#222" stroke-width="1.3"/><line x1="545" y1="253.5" x2="557" y2="253.5" stroke="#222" stroke-width="1.3"/><rect x="528.3" y="260.8" width="7.70" height="3.50" fill="none" stroke="#222" stroke-width="0.6"/><rect x="513.4" y="268.5" width="27.00" height="22.20" fill="none" stroke="#222" stroke-width="0.8"/><line x1="519.2" y1="268.5" x2="519.2" y2="290.7" stroke="#222" stroke-width="0.6"/><circle cx="516.3" cy="272.5" r="1.1" fill="#fff" stroke="#222" stroke-width="0.5"/><circle cx="516.3" cy="279.3" r="1.1" fill="#fff" stroke="#222" stroke-width="0.5"/><circle cx="516.3" cy="286.1" r="1.1" fill="#fff" stroke="#222" stroke-width="0.5"/><rect x="520.8" y="277.0" width="14.40" height="7.70" fill="none" stroke="#222" stroke-width="0.8"/><rect x="526.5" y="278.8" width="7.00" height="4.20" fill="#333"/><rect x="527.8" y="279.7" width="1.80" height="2.40" fill="#ddd"/><rect x="530.6" y="279.7" width="1.80" height="2.40" fill="#ddd"/><line x1="501.8" y1="275.3" x2="513.4" y2="275.3" stroke="#222" stroke-width="1.3"/><line x1="501.8" y1="283.7" x2="513.4" y2="283.7" stroke="#222" stroke-width="1.3"/><rect x="528.3" y="290.7" width="7.70" height="3.50" fill="none" stroke="#222" stroke-width="0.6"/><rect x="540.2" y="267.3" width="16.00" height="23.40" fill="none" stroke="#222" stroke-width="0.8"/><rect x="542.6" y="270.1" width="1.60" height="7.60" fill="#222"/><rect x="550.2" y="270.1" width="1.60" height="7.60" fill="#222"/><rect x="542.6" y="273.52000000000004" width="9.20" height="1.30" fill="#222"/><line x1="547.2" y1="270.1" x2="547.2" y2="277.70000000000005" stroke="#222" stroke-width="0.8"/><rect x="541.5" y="269.6" width="11.50" height="8.40" fill="none" stroke="#222" stroke-width="0.5"/><rect x="542.6" y="283.7" width="1.60" height="6.60" fill="#222"/><rect x="550.2" y="283.7" width="1.60" height="6.60" fill="#222"/><rect x="542.6" y="286.67" width="9.20" height="1.30" fill="#222"/><line x1="547.2" y1="283.7" x2="547.2" y2="290.3" stroke="#222" stroke-width="0.8"/><rect x="541.5" y="283.2" width="11.50" height="7.40" fill="none" stroke="#222" stroke-width="0.5"/><rect x="542" y="279.1" width="11.00" height="3.60" fill="#aaa"/><rect x="557" y="122" width="16.00" height="26.60" fill="none" stroke="#222" stroke-width="0.8"/><line x1="570.3" y1="123" x2="570.3" y2="147.6" stroke="#444" stroke-width="0.6" stroke-dasharray="1.2 1.4"/><line x1="559.2" y1="124" x2="559.2" y2="146.6" stroke="#222" stroke-width="0.4"/><rect x="563.6" y="125.522" width="2.60" height="2.20" fill="none" stroke="#222" stroke-width="0.6"/><rect x="563.6" y="132.172" width="2.60" height="2.20" fill="none" stroke="#222" stroke-width="0.6"/><rect x="563.6" y="137.492" width="2.60" height="2.20" fill="none" stroke="#222" stroke-width="0.6"/><rect x="562.6" y="143.28" width="4.40" height="2.60" fill="none" stroke="#222" stroke-width="0.7"/><rect x="556.8000000000001" y="121.8" width="1.80" height="1.80" fill="#222"/><rect x="571.4" y="121.8" width="1.80" height="1.80" fill="#222"/><rect x="556.8000000000001" y="147.0" width="1.80" height="1.80" fill="#222"/><rect x="571.4" y="147.0" width="1.80" height="1.80" fill="#222"/><rect x="557" y="149.5" width="16.00" height="26.00" fill="none" stroke="#222" stroke-width="0.8"/><line x1="570.3" y1="150.5" x2="570.3" y2="174.5" stroke="#444" stroke-width="0.6" stroke-dasharray="1.2 1.4"/><line x1="559.2" y1="151.5" x2="559.2" y2="173.5" stroke="#222" stroke-width="0.4"/><rect x="563.6" y="152.92" width="2.60" height="2.20" fill="none" stroke="#222" stroke-width="0.6"/><rect x="563.6" y="159.42" width="2.60" height="2.20" fill="none" stroke="#222" stroke-width="0.6"/><rect x="563.6" y="164.62" width="2.60" height="2.20" fill="none" stroke="#222" stroke-width="0.6"/><rect x="562.6" y="170.3" width="4.40" height="2.60" fill="none" stroke="#222" stroke-width="0.7"/><rect x="556.8000000000001" y="149.29999999999998" width="1.80" height="1.80" fill="#222"/><rect x="571.4" y="149.29999999999998" width="1.80" height="1.80" fill="#222"/><rect x="556.8000000000001" y="173.9" width="1.80" height="1.80" fill="#222"/><rect x="571.4" y="173.9" width="1.80" height="1.80" fill="#222"/><rect x="557" y="176.5" width="16.00" height="26.00" fill="none" stroke="#222" stroke-width="0.8"/><line x1="570.3" y1="177.5" x2="570.3" y2="201.5" stroke="#444" stroke-width="0.6" stroke-dasharray="1.2 1.4"/><line x1="559.2" y1="178.5" x2="559.2" y2="200.5" stroke="#222" stroke-width="0.4"/><rect x="563.6" y="179.92" width="2.60" height="2.20" fill="none" stroke="#222" stroke-width="0.6"/><rect x="563.6" y="186.42" width="2.60" height="2.20" fill="none" stroke="#222" stroke-width="0.6"/><rect x="563.6" y="191.62" width="2.60" height="2.20" fill="none" stroke="#222" stroke-width="0.6"/><rect x="562.6" y="197.3" width="4.40" height="2.60" fill="none" stroke="#222" stroke-width="0.7"/><rect x="556.8000000000001" y="176.29999999999998" width="1.80" height="1.80" fill="#222"/><rect x="571.4" y="176.29999999999998" width="1.80" height="1.80" fill="#222"/><rect x="556.8000000000001" y="200.9" width="1.80" height="1.80" fill="#222"/><rect x="571.4" y="200.9" width="1.80" height="1.80" fill="#222"/><rect x="557" y="203.5" width="16.00" height="26.00" fill="none" stroke="#222" stroke-width="0.8"/><line x1="570.3" y1="204.5" x2="570.3" y2="228.5" stroke="#444" stroke-width="0.6" stroke-dasharray="1.2 1.4"/><line x1="559.2" y1="205.5" x2="559.2" y2="227.5" stroke="#222" stroke-width="0.4"/><rect x="563.6" y="206.92" width="2.60" height="2.20" fill="none" stroke="#222" stroke-width="0.6"/><rect x="563.6" y="213.42" width="2.60" height="2.20" fill="none" stroke="#222" stroke-width="0.6"/><rect x="563.6" y="218.62" width="2.60" height="2.20" fill="none" stroke="#222" stroke-width="0.6"/><rect x="562.6" y="224.3" width="4.40" height="2.60" fill="none" stroke="#222" stroke-width="0.7"/><rect x="556.8000000000001" y="203.29999999999998" width="1.80" height="1.80" fill="#222"/><rect x="571.4" y="203.29999999999998" width="1.80" height="1.80" fill="#222"/><rect x="556.8000000000001" y="227.9" width="1.80" height="1.80" fill="#222"/><rect x="571.4" y="227.9" width="1.80" height="1.80" fill="#222"/><rect x="557" y="268" width="16.00" height="24.00" fill="none" stroke="#222" stroke-width="0.8"/><line x1="570.3" y1="269" x2="570.3" y2="291" stroke="#444" stroke-width="0.6" stroke-dasharray="1.2 1.4"/><line x1="559.2" y1="270" x2="559.2" y2="290" stroke="#222" stroke-width="0.4"/><rect x="563.6" y="271.08" width="2.60" height="2.20" fill="none" stroke="#222" stroke-width="0.6"/><rect x="563.6" y="277.08" width="2.60" height="2.20" fill="none" stroke="#222" stroke-width="0.6"/><rect x="563.6" y="281.88" width="2.60" height="2.20" fill="none" stroke="#222" stroke-width="0.6"/><rect x="562.6" y="287.2" width="4.40" height="2.60" fill="none" stroke="#222" stroke-width="0.7"/><rect x="556.8000000000001" y="267.8" width="1.80" height="1.80" fill="#222"/><rect x="571.4" y="267.8" width="1.80" height="1.80" fill="#222"/><rect x="556.8000000000001" y="290.40000000000003" width="1.80" height="1.80" fill="#222"/><rect x="571.4" y="290.40000000000003" width="1.80" height="1.80" fill="#222"/><rect x="575.1" y="123.5" width="4.70" height="19.60" fill="none" stroke="#222" stroke-width="0.6"/><rect x="622.0" y="123.5" width="4.70" height="19.60" fill="none" stroke="#222" stroke-width="0.6"/><rect x="582.2" y="122.8" width="37.80" height="21.00" fill="none" stroke="#222" stroke-width="0.8"/><rect x="588.4" y="124.2" width="26.20" height="19.20" fill="none" stroke="#222" stroke-width="0.8"/><rect x="583.3" y="124.0" width="3.30" height="2.60" fill="none" stroke="#222" stroke-width="0.5"/><rect x="616.0" y="124.0" width="3.30" height="2.60" fill="none" stroke="#222" stroke-width="0.5"/><rect x="583.3" y="128.15" width="3.30" height="2.60" fill="none" stroke="#222" stroke-width="0.5"/><rect x="616.0" y="128.15" width="3.30" height="2.60" fill="none" stroke="#222" stroke-width="0.5"/><rect x="583.3" y="132.3" width="3.30" height="2.60" fill="none" stroke="#222" stroke-width="0.5"/><rect x="616.0" y="132.3" width="3.30" height="2.60" fill="none" stroke="#222" stroke-width="0.5"/><rect x="583.3" y="136.45000000000002" width="3.30" height="2.60" fill="none" stroke="#222" stroke-width="0.5"/><rect x="616.0" y="136.45000000000002" width="3.30" height="2.60" fill="none" stroke="#222" stroke-width="0.5"/><rect x="583.3" y="140.60000000000002" width="3.30" height="2.60" fill="none" stroke="#222" stroke-width="0.5"/><rect x="616.0" y="140.60000000000002" width="3.30" height="2.60" fill="none" stroke="#222" stroke-width="0.5"/><circle cx="601.5" cy="133.3" r="1.4" fill="#fff" stroke="#222" stroke-width="0.7"/><rect x="593" y="129.0" width="1.40" height="6.00" fill="#8ab"/><rect x="582.5" y="121.4" width="37.20" height="2.20" fill="#2a2a2a"/><rect x="584.5" y="121.9" width="2.20" height="1.00" fill="#fff" opacity="0.85"/><rect x="589" y="121.9" width="2.20" height="1.00" fill="#fff" opacity="0.85"/><rect x="593.5" y="121.9" width="2.20" height="1.00" fill="#fff" opacity="0.85"/><rect x="599" y="121.9" width="2.20" height="1.00" fill="#fff" opacity="0.85"/><rect x="604" y="121.9" width="2.20" height="1.00" fill="#fff" opacity="0.85"/><rect x="609" y="121.9" width="2.20" height="1.00" fill="#fff" opacity="0.85"/><rect x="614" y="121.9" width="2.20" height="1.00" fill="#fff" opacity="0.85"/><rect x="617.5" y="121.9" width="2.20" height="1.00" fill="#fff" opacity="0.85"/><rect x="582.5" y="144.4" width="37.20" height="2.20" fill="#2a2a2a"/><rect x="584.5" y="144.9" width="2.20" height="1.00" fill="#fff" opacity="0.85"/><rect x="589" y="144.9" width="2.20" height="1.00" fill="#fff" opacity="0.85"/><rect x="593.5" y="144.9" width="2.20" height="1.00" fill="#fff" opacity="0.85"/><rect x="599" y="144.9" width="2.20" height="1.00" fill="#fff" opacity="0.85"/><rect x="604" y="144.9" width="2.20" height="1.00" fill="#fff" opacity="0.85"/><rect x="609" y="144.9" width="2.20" height="1.00" fill="#fff" opacity="0.85"/><rect x="614" y="144.9" width="2.20" height="1.00" fill="#fff" opacity="0.85"/><rect x="617.5" y="144.9" width="2.20" height="1.00" fill="#fff" opacity="0.85"/><rect x="575.1" y="151.0" width="4.70" height="18.70" fill="none" stroke="#222" stroke-width="0.6"/><rect x="622.0" y="151.0" width="4.70" height="18.70" fill="none" stroke="#222" stroke-width="0.6"/><rect x="582.2" y="150.3" width="37.80" height="20.10" fill="none" stroke="#222" stroke-width="0.8"/><rect x="588.4" y="151.7" width="26.20" height="18.30" fill="none" stroke="#222" stroke-width="0.8"/><rect x="583.3" y="151.5" width="3.30" height="2.60" fill="none" stroke="#222" stroke-width="0.5"/><rect x="616.0" y="151.5" width="3.30" height="2.60" fill="none" stroke="#222" stroke-width="0.5"/><rect x="583.3" y="155.425" width="3.30" height="2.60" fill="none" stroke="#222" stroke-width="0.5"/><rect x="616.0" y="155.425" width="3.30" height="2.60" fill="none" stroke="#222" stroke-width="0.5"/><rect x="583.3" y="159.35" width="3.30" height="2.60" fill="none" stroke="#222" stroke-width="0.5"/><rect x="616.0" y="159.35" width="3.30" height="2.60" fill="none" stroke="#222" stroke-width="0.5"/><rect x="583.3" y="163.27499999999998" width="3.30" height="2.60" fill="none" stroke="#222" stroke-width="0.5"/><rect x="616.0" y="163.27499999999998" width="3.30" height="2.60" fill="none" stroke="#222" stroke-width="0.5"/><rect x="583.3" y="167.2" width="3.30" height="2.60" fill="none" stroke="#222" stroke-width="0.5"/><rect x="616.0" y="167.2" width="3.30" height="2.60" fill="none" stroke="#222" stroke-width="0.5"/><circle cx="601.5" cy="160.35" r="1.4" fill="#fff" stroke="#222" stroke-width="0.7"/><rect x="593" y="156.5" width="1.40" height="6.00" fill="#8ab"/><rect x="582.5" y="148.9" width="37.20" height="2.20" fill="#2a2a2a"/><rect x="584.5" y="149.4" width="2.20" height="1.00" fill="#fff" opacity="0.85"/><rect x="589" y="149.4" width="2.20" height="1.00" fill="#fff" opacity="0.85"/><rect x="593.5" y="149.4" width="2.20" height="1.00" fill="#fff" opacity="0.85"/><rect x="599" y="149.4" width="2.20" height="1.00" fill="#fff" opacity="0.85"/><rect x="604" y="149.4" width="2.20" height="1.00" fill="#fff" opacity="0.85"/><rect x="609" y="149.4" width="2.20" height="1.00" fill="#fff" opacity="0.85"/><rect x="614" y="149.4" width="2.20" height="1.00" fill="#fff" opacity="0.85"/><rect x="617.5" y="149.4" width="2.20" height="1.00" fill="#fff" opacity="0.85"/><rect x="582.5" y="171.0" width="37.20" height="2.20" fill="#2a2a2a"/><rect x="584.5" y="171.5" width="2.20" height="1.00" fill="#fff" opacity="0.85"/><rect x="589" y="171.5" width="2.20" height="1.00" fill="#fff" opacity="0.85"/><rect x="593.5" y="171.5" width="2.20" height="1.00" fill="#fff" opacity="0.85"/><rect x="599" y="171.5" width="2.20" height="1.00" fill="#fff" opacity="0.85"/><rect x="604" y="171.5" width="2.20" height="1.00" fill="#fff" opacity="0.85"/><rect x="609" y="171.5" width="2.20" height="1.00" fill="#fff" opacity="0.85"/><rect x="614" y="171.5" width="2.20" height="1.00" fill="#fff" opacity="0.85"/><rect x="617.5" y="171.5" width="2.20" height="1.00" fill="#fff" opacity="0.85"/><rect x="575.1" y="177.0" width="4.70" height="20.00" fill="none" stroke="#222" stroke-width="0.6"/><rect x="622.0" y="177.0" width="4.70" height="20.00" fill="none" stroke="#222" stroke-width="0.6"/><rect x="582.2" y="176.3" width="37.80" height="21.40" fill="none" stroke="#222" stroke-width="0.8"/><rect x="588.4" y="177.7" width="26.20" height="19.60" fill="none" stroke="#222" stroke-width="0.8"/><rect x="583.3" y="177.5" width="3.30" height="2.60" fill="none" stroke="#222" stroke-width="0.5"/><rect x="616.0" y="177.5" width="3.30" height="2.60" fill="none" stroke="#222" stroke-width="0.5"/><rect x="583.3" y="181.75" width="3.30" height="2.60" fill="none" stroke="#222" stroke-width="0.5"/><rect x="616.0" y="181.75" width="3.30" height="2.60" fill="none" stroke="#222" stroke-width="0.5"/><rect x="583.3" y="186.0" width="3.30" height="2.60" fill="none" stroke="#222" stroke-width="0.5"/><rect x="616.0" y="186.0" width="3.30" height="2.60" fill="none" stroke="#222" stroke-width="0.5"/><rect x="583.3" y="190.25" width="3.30" height="2.60" fill="none" stroke="#222" stroke-width="0.5"/><rect x="616.0" y="190.25" width="3.30" height="2.60" fill="none" stroke="#222" stroke-width="0.5"/><rect x="583.3" y="194.5" width="3.30" height="2.60" fill="none" stroke="#222" stroke-width="0.5"/><rect x="616.0" y="194.5" width="3.30" height="2.60" fill="none" stroke="#222" stroke-width="0.5"/><circle cx="601.5" cy="187.0" r="1.4" fill="#fff" stroke="#222" stroke-width="0.7"/><rect x="593" y="182.5" width="1.40" height="6.00" fill="#8ab"/><rect x="582.5" y="174.9" width="37.20" height="2.20" fill="#2a2a2a"/><rect x="584.5" y="175.4" width="2.20" height="1.00" fill="#fff" opacity="0.85"/><rect x="589" y="175.4" width="2.20" height="1.00" fill="#fff" opacity="0.85"/><rect x="593.5" y="175.4" width="2.20" height="1.00" fill="#fff" opacity="0.85"/><rect x="599" y="175.4" width="2.20" height="1.00" fill="#fff" opacity="0.85"/><rect x="604" y="175.4" width="2.20" height="1.00" fill="#fff" opacity="0.85"/><rect x="609" y="175.4" width="2.20" height="1.00" fill="#fff" opacity="0.85"/><rect x="614" y="175.4" width="2.20" height="1.00" fill="#fff" opacity="0.85"/><rect x="617.5" y="175.4" width="2.20" height="1.00" fill="#fff" opacity="0.85"/><rect x="582.5" y="198.3" width="37.20" height="2.20" fill="#2a2a2a"/><rect x="584.5" y="198.8" width="2.20" height="1.00" fill="#fff" opacity="0.85"/><rect x="589" y="198.8" width="2.20" height="1.00" fill="#fff" opacity="0.85"/><rect x="593.5" y="198.8" width="2.20" height="1.00" fill="#fff" opacity="0.85"/><rect x="599" y="198.8" width="2.20" height="1.00" fill="#fff" opacity="0.85"/><rect x="604" y="198.8" width="2.20" height="1.00" fill="#fff" opacity="0.85"/><rect x="609" y="198.8" width="2.20" height="1.00" fill="#fff" opacity="0.85"/><rect x="614" y="198.8" width="2.20" height="1.00" fill="#fff" opacity="0.85"/><rect x="617.5" y="198.8" width="2.20" height="1.00" fill="#fff" opacity="0.85"/><rect x="575.1" y="203.3" width="4.70" height="19.50" fill="none" stroke="#222" stroke-width="0.6"/><rect x="622.0" y="203.3" width="4.70" height="19.50" fill="none" stroke="#222" stroke-width="0.6"/><rect x="582.2" y="202.60000000000002" width="37.80" height="20.90" fill="none" stroke="#222" stroke-width="0.8"/><rect x="588.4" y="204.0" width="26.20" height="19.10" fill="none" stroke="#222" stroke-width="0.8"/><rect x="583.3" y="203.8" width="3.30" height="2.60" fill="none" stroke="#222" stroke-width="0.5"/><rect x="616.0" y="203.8" width="3.30" height="2.60" fill="none" stroke="#222" stroke-width="0.5"/><rect x="583.3" y="207.925" width="3.30" height="2.60" fill="none" stroke="#222" stroke-width="0.5"/><rect x="616.0" y="207.925" width="3.30" height="2.60" fill="none" stroke="#222" stroke-width="0.5"/><rect x="583.3" y="212.05" width="3.30" height="2.60" fill="none" stroke="#222" stroke-width="0.5"/><rect x="616.0" y="212.05" width="3.30" height="2.60" fill="none" stroke="#222" stroke-width="0.5"/><rect x="583.3" y="216.175" width="3.30" height="2.60" fill="none" stroke="#222" stroke-width="0.5"/><rect x="616.0" y="216.175" width="3.30" height="2.60" fill="none" stroke="#222" stroke-width="0.5"/><rect x="583.3" y="220.3" width="3.30" height="2.60" fill="none" stroke="#222" stroke-width="0.5"/><rect x="616.0" y="220.3" width="3.30" height="2.60" fill="none" stroke="#222" stroke-width="0.5"/><circle cx="601.5" cy="213.05" r="1.4" fill="#fff" stroke="#222" stroke-width="0.7"/><rect x="593" y="208.8" width="1.40" height="6.00" fill="#8ab"/><rect x="582.5" y="201.20000000000002" width="37.20" height="2.20" fill="#2a2a2a"/><rect x="584.5" y="201.70000000000002" width="2.20" height="1.00" fill="#fff" opacity="0.85"/><rect x="589" y="201.70000000000002" width="2.20" height="1.00" fill="#fff" opacity="0.85"/><rect x="593.5" y="201.70000000000002" width="2.20" height="1.00" fill="#fff" opacity="0.85"/><rect x="599" y="201.70000000000002" width="2.20" height="1.00" fill="#fff" opacity="0.85"/><rect x="604" y="201.70000000000002" width="2.20" height="1.00" fill="#fff" opacity="0.85"/><rect x="609" y="201.70000000000002" width="2.20" height="1.00" fill="#fff" opacity="0.85"/><rect x="614" y="201.70000000000002" width="2.20" height="1.00" fill="#fff" opacity="0.85"/><rect x="617.5" y="201.70000000000002" width="2.20" height="1.00" fill="#fff" opacity="0.85"/><rect x="582.5" y="224.10000000000002" width="37.20" height="2.20" fill="#2a2a2a"/><rect x="584.5" y="224.60000000000002" width="2.20" height="1.00" fill="#fff" opacity="0.85"/><rect x="589" y="224.60000000000002" width="2.20" height="1.00" fill="#fff" opacity="0.85"/><rect x="593.5" y="224.60000000000002" width="2.20" height="1.00" fill="#fff" opacity="0.85"/><rect x="599" y="224.60000000000002" width="2.20" height="1.00" fill="#fff" opacity="0.85"/><rect x="604" y="224.60000000000002" width="2.20" height="1.00" fill="#fff" opacity="0.85"/><rect x="609" y="224.60000000000002" width="2.20" height="1.00" fill="#fff" opacity="0.85"/><rect x="614" y="224.60000000000002" width="2.20" height="1.00" fill="#fff" opacity="0.85"/><rect x="617.5" y="224.60000000000002" width="2.20" height="1.00" fill="#fff" opacity="0.85"/><rect x="575.5" y="268.9" width="4.70" height="21.10" fill="none" stroke="#222" stroke-width="0.6"/><rect x="620.3" y="268.9" width="4.70" height="21.10" fill="none" stroke="#222" stroke-width="0.6"/><rect x="582.2" y="268.2" width="37.80" height="22.50" fill="none" stroke="#222" stroke-width="0.8"/><rect x="588.4" y="269.59999999999997" width="26.20" height="20.70" fill="none" stroke="#222" stroke-width="0.8"/><rect x="583.3" y="269.4" width="3.30" height="2.60" fill="none" stroke="#222" stroke-width="0.5"/><rect x="616.0" y="269.4" width="3.30" height="2.60" fill="none" stroke="#222" stroke-width="0.5"/><rect x="583.3" y="273.925" width="3.30" height="2.60" fill="none" stroke="#222" stroke-width="0.5"/><rect x="616.0" y="273.925" width="3.30" height="2.60" fill="none" stroke="#222" stroke-width="0.5"/><rect x="583.3" y="278.45" width="3.30" height="2.60" fill="none" stroke="#222" stroke-width="0.5"/><rect x="616.0" y="278.45" width="3.30" height="2.60" fill="none" stroke="#222" stroke-width="0.5"/><rect x="583.3" y="282.97499999999997" width="3.30" height="2.60" fill="none" stroke="#222" stroke-width="0.5"/><rect x="616.0" y="282.97499999999997" width="3.30" height="2.60" fill="none" stroke="#222" stroke-width="0.5"/><rect x="583.3" y="287.5" width="3.30" height="2.60" fill="none" stroke="#222" stroke-width="0.5"/><rect x="616.0" y="287.5" width="3.30" height="2.60" fill="none" stroke="#222" stroke-width="0.5"/><circle cx="601.5" cy="279.45" r="1.4" fill="#fff" stroke="#222" stroke-width="0.7"/><rect x="593" y="274.4" width="1.40" height="6.00" fill="#8ab"/><rect x="582.5" y="266.79999999999995" width="37.20" height="2.20" fill="#2a2a2a"/><rect x="584.5" y="267.29999999999995" width="2.20" height="1.00" fill="#fff" opacity="0.85"/><rect x="589" y="267.29999999999995" width="2.20" height="1.00" fill="#fff" opacity="0.85"/><rect x="593.5" y="267.29999999999995" width="2.20" height="1.00" fill="#fff" opacity="0.85"/><rect x="599" y="267.29999999999995" width="2.20" height="1.00" fill="#fff" opacity="0.85"/><rect x="604" y="267.29999999999995" width="2.20" height="1.00" fill="#fff" opacity="0.85"/><rect x="609" y="267.29999999999995" width="2.20" height="1.00" fill="#fff" opacity="0.85"/><rect x="614" y="267.29999999999995" width="2.20" height="1.00" fill="#fff" opacity="0.85"/><rect x="617.5" y="267.29999999999995" width="2.20" height="1.00" fill="#fff" opacity="0.85"/><rect x="582.5" y="291.3" width="37.20" height="2.20" fill="#2a2a2a"/><rect x="584.5" y="291.8" width="2.20" height="1.00" fill="#fff" opacity="0.85"/><rect x="589" y="291.8" width="2.20" height="1.00" fill="#fff" opacity="0.85"/><rect x="593.5" y="291.8" width="2.20" height="1.00" fill="#fff" opacity="0.85"/><rect x="599" y="291.8" width="2.20" height="1.00" fill="#fff" opacity="0.85"/><rect x="604" y="291.8" width="2.20" height="1.00" fill="#fff" opacity="0.85"/><rect x="609" y="291.8" width="2.20" height="1.00" fill="#fff" opacity="0.85"/><rect x="614" y="291.8" width="2.20" height="1.00" fill="#fff" opacity="0.85"/><rect x="617.5" y="291.8" width="2.20" height="1.00" fill="#fff" opacity="0.85"/><rect x="565.8" y="231.3" width="67.60" height="22.80" fill="none" stroke="#222" stroke-width="0.9"/><rect x="569.5" y="233.3" width="62.00" height="18.90" fill="none" stroke="#222" stroke-width="0.6"/><line x1="590.5" y1="233.3" x2="590.5" y2="252.2" stroke="#222" stroke-width="1.0"/><line x1="613" y1="233.3" x2="613" y2="252.2" stroke="#222" stroke-width="1.0"/><line x1="602.5" y1="233.3" x2="602.5" y2="252.2" stroke="#222" stroke-width="0.6"/><rect x="586.2" y="233.5" width="3.20" height="13.00" fill="none" stroke="#222" stroke-width="0.6"/><rect x="585.0" y="244.8" width="5.60" height="1.80" fill="#333"/><rect x="585.8000000000001" y="233.3" width="4.00" height="1.50" fill="#333"/><line x1="585.2" y1="249.5" x2="590.4000000000001" y2="249.5" stroke="#222" stroke-width="0.6"/><rect x="614.8" y="233.5" width="3.20" height="13.00" fill="none" stroke="#222" stroke-width="0.6"/><rect x="613.5999999999999" y="244.8" width="5.60" height="1.80" fill="#333"/><rect x="614.4" y="233.3" width="4.00" height="1.50" fill="#333"/><line x1="613.8" y1="249.5" x2="619.0" y2="249.5" stroke="#222" stroke-width="0.6"/><rect x="594.5" y="238" width="1.10" height="7.00" fill="#8ab"/><circle cx="606" cy="248.4" r="1.5" fill="#fff" stroke="#222" stroke-width="0.6"/><circle cx="610" cy="255.6" r="1.1" fill="#fff" stroke="#222" stroke-width="0.5"/><line x1="565.8" y1="256.4" x2="633.4" y2="256.4" stroke="#222" stroke-width="0.5"/><rect x="559" y="230.8" width="5.40" height="33.20" fill="url(#hatch)" stroke="#222" stroke-width="0.8"/><rect x="559" y="257.7" width="101.90" height="6.80" fill="url(#hatch)" stroke="#222" stroke-width="0.8"/><line x1="487.5" y1="265.2" x2="671.5" y2="265.2" stroke="#222" stroke-width="1.4"/><rect x="635.3" y="120.5" width="30.30" height="13.30" fill="url(#hatch)" stroke="#222" stroke-width="0.8"/><rect x="637.5" y="133.8" width="3.00" height="7.60" fill="none" stroke="#222" stroke-width="0.6"/><rect x="657.5" y="133.8" width="3.00" height="7.60" fill="none" stroke="#222" stroke-width="0.6"/><rect x="630.5" y="141.4" width="5.30" height="89.80" fill="url(#hatch)" stroke="#222" stroke-width="0.8"/><rect x="635.8" y="141.4" width="25.20" height="4.80" fill="url(#hatch)" stroke="#222" stroke-width="0.8"/><rect x="660.9" y="141.4" width="6.70" height="246.90" fill="url(#hatch)" stroke="#222" stroke-width="0.8"/><rect x="635.8" y="227.5" width="25.10" height="3.70" fill="url(#hatch)" stroke="#222" stroke-width="0.8"/><rect x="639.8" y="145.6" width="5.60" height="9.40" fill="none" stroke="#222" stroke-width="0.6"/><rect x="641.0" y="146.8" width="3.20" height="2.80" fill="#222"/><rect x="641.0" y="151.2" width="3.20" height="2.80" fill="#222"/><line x1="642.5999999999999" y1="146" x2="642.5999999999999" y2="154.6" stroke="#222" stroke-width="0.5"/><rect x="645.6" y="145.6" width="5.60" height="9.40" fill="none" stroke="#222" stroke-width="0.6"/><rect x="646.8000000000001" y="146.8" width="3.20" height="2.80" fill="#222"/><rect x="646.8000000000001" y="151.2" width="3.20" height="2.80" fill="#222"/><line x1="648.4" y1="146" x2="648.4" y2="154.6" stroke="#222" stroke-width="0.5"/><rect x="651.4" y="145.6" width="5.60" height="9.40" fill="none" stroke="#222" stroke-width="0.6"/><rect x="652.6" y="146.8" width="3.20" height="2.80" fill="#222"/><rect x="652.6" y="151.2" width="3.20" height="2.80" fill="#222"/><line x1="654.1999999999999" y1="146" x2="654.1999999999999" y2="154.6" stroke="#222" stroke-width="0.5"/><rect x="639.6" y="157.2" width="17.60" height="10.20" fill="none" stroke="#222" stroke-width="1.0"/><rect x="652.5" y="159" width="3.00" height="2.00" fill="#444"/><rect x="652.5" y="163.5" width="3.00" height="2.00" fill="#444"/><rect x="640.5" y="169.2" width="7.60" height="17.00" fill="none" stroke="#222" stroke-width="0.7"/><rect x="641.5" y="170.5" width="1.60" height="14.50" fill="#222"/><rect x="645.3" y="170.5" width="1.80" height="14.50" fill="#333"/><rect x="640.5" y="176.5" width="7.60" height="2.00" fill="#222"/><rect x="648.5" y="169.2" width="7.60" height="17.00" fill="none" stroke="#222" stroke-width="0.7"/><rect x="649.5" y="170.5" width="1.60" height="14.50" fill="#222"/><rect x="653.3" y="170.5" width="1.80" height="14.50" fill="#333"/><rect x="648.5" y="176.5" width="7.60" height="2.00" fill="#222"/><rect x="638.4" y="187.6" width="19.00" height="14.40" fill="none" stroke="#222" stroke-width="0.8"/><rect x="640.5" y="189.5" width="15.00" height="10.50" fill="none" stroke="#222" stroke-width="0.5"/><line x1="644" y1="192" x2="647.5" y2="198" stroke="#222" stroke-width="0.6"/><line x1="647.5" y1="198" x2="651" y2="192" stroke="#222" stroke-width="0.6"/><rect x="643" y="204.2" width="10.00" height="4.20" fill="#333"/><rect x="645" y="205.4" width="6.00" height="1.80" fill="#bbb"/><line x1="636" y1="206.3" x2="643" y2="206.3" stroke="#222" stroke-width="0.5"/><line x1="653" y1="206.3" x2="660" y2="206.3" stroke="#222" stroke-width="0.5"/><rect x="639.8" y="210.6" width="17.20" height="13.60" fill="none" stroke="#222" stroke-width="0.9"/><line x1="639.8" y1="214" x2="657" y2="214" stroke="#222" stroke-width="0.5"/><rect x="641.6" y="216.5" width="4.80" height="6.70" fill="none" stroke="#222" stroke-width="0.9"/><rect x="650.4" y="216.5" width="4.80" height="6.70" fill="none" stroke="#222" stroke-width="0.9"/><rect x="642.6" y="218" width="2.80" height="4.00" fill="#666"/><rect x="651.4" y="218" width="2.80" height="4.00" fill="#666"/><rect x="498.4" y="294.6" width="127.50" height="6.80" fill="url(#hatch)" stroke="#222" stroke-width="0.8"/><rect x="498.4" y="301.4" width="5.80" height="86.70" fill="url(#hatch)" stroke="#222" stroke-width="0.8"/><rect x="531.2" y="301.4" width="6.80" height="86.70" fill="url(#hatch)" stroke="#222" stroke-width="0.8"/><rect x="625.9" y="265.5" width="6.60" height="122.90" fill="url(#hatch)" stroke="#222" stroke-width="0.8"/><rect x="632.5" y="381.8" width="28.40" height="6.60" fill="url(#hatch)" stroke="#222" stroke-width="0.8"/><line x1="498.4" y1="294.6" x2="498.4" y2="388" stroke="#222" stroke-width="0.8"/><rect x="510" y="302.3" width="16.60" height="85.70" fill="#fff"/><rect x="510.3" y="306.4" width="2.00" height="81.60" fill="#2a2a2a"/><rect x="513.0" y="306.4" width="2.60" height="81.60" fill="#8a8a8a"/><rect x="518.2" y="306.4" width="2.20" height="81.60" fill="#333"/><rect x="521.2" y="306.4" width="2.40" height="81.60" fill="#888"/><rect x="524.4" y="306.4" width="2.00" height="81.60" fill="#2a2a2a"/><rect x="510" y="309.0" width="16.60" height="0.80" fill="#222"/><rect x="510" y="313.6" width="16.60" height="0.80" fill="#222"/><rect x="510" y="318.2" width="16.60" height="0.80" fill="#222"/><rect x="510" y="322.8" width="16.60" height="0.80" fill="#222"/><rect x="510" y="327.4" width="16.60" height="0.80" fill="#222"/><rect x="510" y="332.0" width="16.60" height="0.80" fill="#222"/><rect x="510" y="336.6" width="16.60" height="0.80" fill="#222"/><rect x="510" y="341.2" width="16.60" height="0.80" fill="#222"/><rect x="510" y="345.8" width="16.60" height="0.80" fill="#222"/><rect x="510" y="350.4" width="16.60" height="0.80" fill="#222"/><rect x="510" y="355.0" width="16.60" height="0.80" fill="#222"/><rect x="510" y="359.6" width="16.60" height="0.80" fill="#222"/><rect x="510" y="364.2" width="16.60" height="0.80" fill="#222"/><rect x="510" y="368.8" width="16.60" height="0.80" fill="#222"/><rect x="510" y="373.4" width="16.60" height="0.80" fill="#222"/><rect x="510" y="378.0" width="16.60" height="0.80" fill="#222"/><rect x="510" y="382.6" width="16.60" height="0.80" fill="#222"/><rect x="510" y="387.2" width="16.60" height="0.80" fill="#222"/><rect x="510" y="302.3" width="16.60" height="85.70" fill="none" stroke="#222" stroke-width="0.6"/><rect x="510" y="302.3" width="16.60" height="4.10" fill="#111"/><rect x="513" y="303.4" width="10.00" height="2.00" fill="#fff"/><rect x="510" y="323.6" width="16.60" height="3.90" fill="#111"/><rect x="513" y="324.6" width="10.00" height="2.00" fill="#fff"/><rect x="509.4" y="350.8" width="18.40" height="11.40" fill="#2a2a2a"/><rect x="510.8" y="351.7" width="2.60" height="2.81" fill="#f4f4f4"/><rect x="514.4" y="351.7" width="3.00" height="2.81" fill="#d0d0d0"/><rect x="519.6" y="351.7" width="2.60" height="2.81" fill="#f4f4f4"/><rect x="523.2" y="351.7" width="3.00" height="2.81" fill="#d0d0d0"/><rect x="510.8" y="356.79999999999995" width="2.60" height="2.81" fill="#f4f4f4"/><rect x="514.4" y="356.79999999999995" width="3.00" height="2.81" fill="#d0d0d0"/><rect x="519.6" y="356.79999999999995" width="2.60" height="2.81" fill="#f4f4f4"/><rect x="523.2" y="356.79999999999995" width="3.00" height="2.81" fill="#d0d0d0"/><rect x="509.4" y="367.0" width="18.40" height="20.20" fill="#2a2a2a"/><rect x="510.8" y="367.9" width="2.60" height="3.48" fill="#f4f4f4"/><rect x="514.4" y="367.9" width="3.00" height="3.48" fill="#d0d0d0"/><rect x="519.6" y="367.9" width="2.60" height="3.48" fill="#f4f4f4"/><rect x="523.2" y="367.9" width="3.00" height="3.48" fill="#d0d0d0"/><rect x="510.8" y="374.2333333333333" width="2.60" height="3.48" fill="#f4f4f4"/><rect x="514.4" y="374.2333333333333" width="3.00" height="3.48" fill="#d0d0d0"/><rect x="519.6" y="374.2333333333333" width="2.60" height="3.48" fill="#f4f4f4"/><rect x="523.2" y="374.2333333333333" width="3.00" height="3.48" fill="#d0d0d0"/><rect x="510.8" y="380.56666666666666" width="2.60" height="3.48" fill="#f4f4f4"/><rect x="514.4" y="380.56666666666666" width="3.00" height="3.48" fill="#d0d0d0"/><rect x="519.6" y="380.56666666666666" width="2.60" height="3.48" fill="#f4f4f4"/><rect x="523.2" y="380.56666666666666" width="3.00" height="3.48" fill="#d0d0d0"/><rect x="506" y="304" width="1.2" height="76" fill="url(#dots)" opacity="0.9"/><rect x="527.5" y="304" width="1.0" height="26" fill="url(#dots)" opacity="0.9"/><rect x="541.1" y="303" width="12.40" height="85.00" fill="none" stroke="#222" stroke-width="0.6"/><line x1="545.9" y1="305" x2="545.9" y2="386" stroke="#222" stroke-width="0.6"/><line x1="551" y1="305" x2="551" y2="386" stroke="#222" stroke-width="0.4"/><rect x="545.2" y="312.5" width="1.40" height="1.50" fill="#333"/><rect x="545.2" y="371.5" width="1.40" height="1.50" fill="#333"/><rect x="538" y="330" width="14.50" height="19.50" fill="none" stroke="#222" stroke-width="0.8"/><rect x="539.8" y="332.0" width="11.00" height="3.00" fill="none" stroke="#222" stroke-width="0.6"/><line x1="545.3" y1="332.0" x2="545.3" y2="335.0" stroke="#222" stroke-width="0.6"/><rect x="539.8" y="336.3" width="11.00" height="3.00" fill="none" stroke="#222" stroke-width="0.6"/><line x1="545.3" y1="336.3" x2="545.3" y2="339.3" stroke="#222" stroke-width="0.6"/><rect x="539.8" y="340.6" width="11.00" height="3.00" fill="none" stroke="#222" stroke-width="0.6"/><line x1="545.3" y1="340.6" x2="545.3" y2="343.6" stroke="#222" stroke-width="0.6"/><rect x="539.8" y="344.9" width="11.00" height="3.00" fill="none" stroke="#222" stroke-width="0.6"/><line x1="545.3" y1="344.9" x2="545.3" y2="347.9" stroke="#222" stroke-width="0.6"/><rect x="555.6" y="301.4" width="8.20" height="86.60" fill="#5c5c5c"/><rect x="555.6" y="301.4" width="1.20" height="86.60" fill="#bbb"/><rect x="559.6" y="301.4" width="1.00" height="86.60" fill="#8a8a8a"/><rect x="572" y="301.4" width="7.20" height="86.60" fill="#5c5c5c"/><rect x="575.2" y="301.4" width="1.00" height="86.60" fill="#8a8a8a"/><rect x="563.8" y="301.4" width="8.20" height="86.60" fill="none" stroke="#222" stroke-width="0.6"/><rect x="564.6" y="327.5" width="6.60" height="8.50" fill="none" stroke="#222" stroke-width="0.7"/><rect x="565.8" y="331.1" width="4.20" height="1.30" fill="#333"/><rect x="564.6" y="359.5" width="6.60" height="8.50" fill="none" stroke="#222" stroke-width="0.7"/><rect x="565.8" y="363.1" width="4.20" height="1.30" fill="#333"/><rect x="578.6" y="301.4" width="28.10" height="86.60" fill="none" stroke="#222" stroke-width="0.6"/><line x1="578.6" y1="330.6" x2="606.7" y2="330.6" stroke="#222" stroke-width="0.7"/><line x1="578.6" y1="333.5" x2="606.7" y2="333.5" stroke="#222" stroke-width="0.7"/><line x1="578.6" y1="359.6" x2="606.7" y2="359.6" stroke="#222" stroke-width="0.7"/><line x1="578.6" y1="362.5" x2="606.7" y2="362.5" stroke="#222" stroke-width="0.7"/><line x1="611.5" y1="301.4" x2="611.5" y2="388" stroke="#222" stroke-width="0.5"/><line x1="620.2" y1="301.4" x2="620.2" y2="388" stroke="#222" stroke-width="0.5"/><rect x="595.5" y="342" width="1.00" height="8.00" fill="#8aa"/><rect x="609.6" y="324.8" width="12.60" height="6.70" fill="none" stroke="#222" stroke-width="0.8"/><rect x="611" y="331.5" width="10.00" height="35.80" fill="url(#term)"/><rect x="611" y="331.5" width="10.00" height="35.80" fill="none" stroke="#222" stroke-width="0.6"/><rect x="634.8" y="265.5" width="23.20" height="26.00" fill="none" stroke="#222" stroke-width="0.8"/><rect x="638" y="266.5" width="17.00" height="23.00" fill="none" stroke="#222" stroke-width="0.5"/><rect x="639" y="287.7" width="14.00" height="4.30" fill="none" stroke="#222" stroke-width="0.8"/><rect x="642.2" y="292" width="10.20" height="26.00" fill="url(#term)"/><rect x="642.2" y="292" width="10.20" height="26.00" fill="none" stroke="#222" stroke-width="0.6"/><rect x="644" y="310" width="6.50" height="8.00" fill="#fff" opacity="0.4"/><rect x="636.5" y="321.2" width="21.50" height="5.80" fill="none" stroke="#222" stroke-width="0.9"/><rect x="639.2" y="322.8" width="1.60" height="2.40" fill="#333"/><rect x="643.2" y="322.8" width="1.60" height="2.40" fill="#333"/><rect x="647.2" y="322.8" width="1.60" height="2.40" fill="#333"/><rect x="651.2" y="322.8" width="1.60" height="2.40" fill="#333"/><rect x="654.7" y="322.8" width="1.60" height="2.40" fill="#333"/><rect x="638.8" y="327" width="14.70" height="25.00" fill="#151515"/><rect x="641.0" y="329.5" width="4.20" height="2.20" fill="#eee"/><rect x="647.0" y="329.5" width="4.20" height="2.20" fill="#eee"/><rect x="641.0" y="334.1" width="4.20" height="2.20" fill="#eee"/><rect x="647.0" y="334.1" width="4.20" height="2.20" fill="#eee"/><rect x="641.0" y="338.7" width="4.20" height="2.20" fill="#eee"/><rect x="647.0" y="338.7" width="4.20" height="2.20" fill="#eee"/><rect x="641.0" y="343.3" width="4.20" height="2.20" fill="#eee"/><rect x="647.0" y="343.3" width="4.20" height="2.20" fill="#eee"/><rect x="641.0" y="347.9" width="4.20" height="2.20" fill="#eee"/><rect x="647.0" y="347.9" width="4.20" height="2.20" fill="#eee"/><rect x="638.5" y="352" width="16.50" height="29.80" fill="none" stroke="#222" stroke-width="0.7"/><rect x="638.8" y="353" width="2.70" height="28.00" fill="#555"/><rect x="652.5" y="353" width="2.50" height="28.00" fill="#555"/><rect x="642.5" y="355.5" width="9.50" height="10.00" fill="none" stroke="#222" stroke-width="1.0"/><rect x="645.5" y="358" width="3.50" height="5.00" fill="#333"/><rect x="642.5" y="367.5" width="9.50" height="10.00" fill="none" stroke="#222" stroke-width="1.0"/><rect x="645.5" y="370" width="3.50" height="5.00" fill="#333"/><rect x="640" y="378" width="14.00" height="3.00" fill="#333"/><rect x="634" y="328" width="1.0" height="22" fill="url(#dots)" opacity="0.9"/><rect x="655.6" y="326" width="1.0" height="54" fill="url(#dots)" opacity="0.9"/><rect x="632.8" y="290" width="1.0" height="10" fill="url(#dots)" opacity="0.9"/><rect x="633.5" y="326" width="1.2" height="26" fill="url(#dots)" opacity="0.9"/><line x1="647" y1="392.4" x2="645.5" y2="398.3" stroke="#222" stroke-width="0.6"/><rect x="633.8" y="398.3" width="24.20" height="12.70" fill="none" stroke="#222" stroke-width="0.7"/><rect x="637" y="403" width="18.00" height="3.00" fill="url(#termd)"/><rect x="623.6" y="396" width="1.2" height="16" fill="url(#dots)" opacity="0.9"/><rect x="626.5" y="396" width="1.2" height="16" fill="url(#dots)" opacity="0.9"/><rect x="629.5" y="396" width="1.2" height="14" fill="url(#dots)" opacity="0.9"/><g transform="translate(494.8,399.2) rotate(-28)"><path d="M-8.6 -1.7H-4.6V-2.6H1.8V-3.3H6.6V3.3H1.8V2.6H-4.6V1.7H-8.6Z" fill="#fff" stroke="#333" stroke-width="0.65"/><path d="M-4.6 -2.6V2.6M1.8 -2.6V2.6" stroke="#333" stroke-width="0.5"/><path d="M2.8 -3.3V3.3M3.8 -3.3V3.3M4.8 -3.3V3.3M5.8 -3.3V3.3" stroke="#555" stroke-width="0.45"/></g><line x1="491.05" y1="408.0" x2="491.05" y2="413.0" stroke="#4f6378" stroke-width="1.0" stroke-dasharray="1.3 0.7" opacity="0.85"/><line x1="496.05" y1="403.0" x2="496.05" y2="415.0" stroke="#4f6378" stroke-width="1.0" stroke-dasharray="1.3 0.7" opacity="0.85"/><line x1="499.05" y1="402.0" x2="499.05" y2="415.0" stroke="#4f6378" stroke-width="1.0" stroke-dasharray="1.3 0.7" opacity="0.85"/><line x1="502.05" y1="401.0" x2="502.05" y2="416.0" stroke="#4f6378" stroke-width="1.0" stroke-dasharray="1.3 0.7" opacity="0.85"/><rect x="697" y="128.5" width="6.00" height="6.50" fill="none" stroke="#222" stroke-width="0.7"/><rect x="694.4" y="135" width="10.10" height="107.30" fill="url(#ladder)"/><rect x="694.4" y="135" width="10.10" height="107.30" fill="none" stroke="#222" stroke-width="0.9"/><line x1="697" y1="135" x2="697" y2="242.3" stroke="#222" stroke-width="0.5"/><line x1="702" y1="135" x2="702" y2="242.3" stroke="#222" stroke-width="0.5"/><rect x="697" y="242.3" width="6.00" height="4.70" fill="none" stroke="#222" stroke-width="0.7"/><rect x="692.8" y="143.35000000000002" width="13.00" height="0.90" fill="#111"/><rect x="692.8" y="158.55" width="13.00" height="0.90" fill="#111"/><rect x="692.8" y="173.95000000000002" width="13.00" height="0.90" fill="#111"/><rect x="692.8" y="194.05" width="13.00" height="0.90" fill="#111"/><rect x="692.8" y="224.55" width="13.00" height="0.90" fill="#111"/><rect x="692.8" y="231.45000000000002" width="13.00" height="0.90" fill="#111"/><rect x="695" y="233" width="9.00" height="9.30" fill="#fff" opacity="0.45"/><rect x="681.3" y="246.3" width="9.00" height="37.80" fill="none" stroke="#222" stroke-width="0.8"/><rect x="681.8" y="247" width="4.00" height="36.50" fill="url(#ladder)"/><circle cx="688" cy="249.3" r="1.0" fill="#fff" stroke="#222" stroke-width="0.5"/><circle cx="688" cy="252.9" r="1.0" fill="#fff" stroke="#222" stroke-width="0.5"/><circle cx="688" cy="256.5" r="1.0" fill="#fff" stroke="#222" stroke-width="0.5"/><circle cx="688" cy="260.1" r="1.0" fill="#fff" stroke="#222" stroke-width="0.5"/><circle cx="688" cy="263.7" r="1.0" fill="#fff" stroke="#222" stroke-width="0.5"/><circle cx="688" cy="267.3" r="1.0" fill="#fff" stroke="#222" stroke-width="0.5"/><circle cx="688" cy="270.90000000000003" r="1.0" fill="#fff" stroke="#222" stroke-width="0.5"/><circle cx="688" cy="274.5" r="1.0" fill="#fff" stroke="#222" stroke-width="0.5"/><circle cx="688" cy="278.1" r="1.0" fill="#fff" stroke="#222" stroke-width="0.5"/><circle cx="688" cy="281.7" r="1.0" fill="#fff" stroke="#222" stroke-width="0.5"/><rect x="684.5" y="288" width="1.2" height="7" fill="url(#dots)" opacity="0.9"/><rect x="692.9" y="255.7" width="12" height="5.2" rx="2.2" fill="#444" stroke="#222" stroke-width="0.6"/><rect x="694.3" y="260.9" width="8.90" height="135.10" fill="url(#ladder2)"/><rect x="694.3" y="260.9" width="8.90" height="135.10" fill="none" stroke="#222" stroke-width="0.8"/><line x1="697.2" y1="261" x2="697.2" y2="396" stroke="#222" stroke-width="0.5"/><line x1="700.4" y1="261" x2="700.4" y2="396" stroke="#222" stroke-width="0.5"/><rect x="696" y="318" width="6.00" height="12.00" fill="#ddd" opacity="0.6"/><path d="M703.5 261.5L705.5 263.0L703.5 264.5Z" fill="#111"/><path d="M703.5 292.5L705.5 294.0L703.5 295.5Z" fill="#111"/><path d="M703.5 331.5L705.5 333.0L703.5 334.5Z" fill="#111"/><path d="M703.5 360.5L705.5 362.0L703.5 363.5Z" fill="#111"/><rect x="694.8" y="392" width="8" height="4" rx="1.6" fill="#fff" stroke="#333" stroke-width="0.6"/><rect x="689" y="128" width="1.0" height="24" fill="url(#dots)" opacity="0.9"/><rect x="689" y="198" width="1.0" height="42" fill="url(#dots)" opacity="0.9"/><rect x="706" y="256" width="1.0" height="24" fill="url(#dots)" opacity="0.9"/><rect x="706" y="300" width="1.0" height="22" fill="url(#dots)" opacity="0.9"/></svg>
<svg class="ic" style="left:396px;top:305px" width="42" height="158" viewBox="396 305 42 158"><defs><radialGradient id="og" cx="0.5" cy="0.62" r="0.55"><stop offset="0" stop-color="#e4552a"/><stop offset="0.55" stop-color="#e9603a"/><stop offset="0.8" stop-color="#f2a58c"/><stop offset="0.93" stop-color="#fbe2d6"/><stop offset="1" stop-color="#e95a30"/></radialGradient><linearGradient id="oh" x1="0" y1="0" x2="0" y2="1"><stop offset="0" stop-color="#fff" stop-opacity="0.9"/><stop offset="0.6" stop-color="#fff" stop-opacity="0.45"/><stop offset="1" stop-color="#fff" stop-opacity="0.0"/></linearGradient><radialGradient id="bg" cx="0.5" cy="0.62" r="0.55"><stop offset="0" stop-color="#2e9be0"/><stop offset="0.55" stop-color="#3aa6e6"/><stop offset="0.8" stop-color="#8ccff2"/><stop offset="0.93" stop-color="#e2f4fc"/><stop offset="1" stop-color="#3aa6e6"/></radialGradient></defs><circle cx="416.6" cy="326.6" r="16.1" fill="#e65a2f" stroke="#7a7a7a" stroke-width="2.1"/><circle cx="416.6" cy="326.6" r="13.6" fill="none" stroke="#fbe0d4" stroke-width="2.0" opacity="0.85"/><ellipse cx="416.6" cy="323.0" rx="12.2" ry="9.0" fill="url(#oh)"/><g transform="translate(416.6,326.8)"><path d="M-9.5 -3.2 L-9.5 4.4 L-0.3 4.9 L9.5 4.4 L9.5 -3.2" fill="#e8e8e8" stroke="#333" stroke-width="0.9"/><path d="M-8.6 -4.4 Q-4 -5.6 -0.2 -3.8 L-0.2 4.3 Q-4 2.8 -8.6 4 Z" fill="#fff" stroke="#333" stroke-width="0.8"/><path d="M8.6 -4.4 Q4 -5.6 0.2 -3.8 L0.2 4.3 Q4 2.8 8.6 4 Z" fill="#fff" stroke="#333" stroke-width="0.8"/><path d="M-5.5 3L-1 -2.2L3.5 -3.4L4 -0.6L-1.5 1.5Z" fill="#444"/><path d="M3.8 -1.5H6.2V2H3.8" fill="none" stroke="#444" stroke-width="0.9"/></g><circle cx="416.6" cy="365.3" r="16.1" fill="#e65a2f" stroke="#7a7a7a" stroke-width="2.1"/><circle cx="416.6" cy="365.3" r="13.6" fill="none" stroke="#fbe0d4" stroke-width="2.0" opacity="0.85"/><ellipse cx="416.6" cy="361.7" rx="12.2" ry="9.0" fill="url(#oh)"/><g transform="translate(416.6,365.5)"><path d="M-9.5 -3.2 L-9.5 4.4 L-0.3 4.9 L9.5 4.4 L9.5 -3.2" fill="#e8e8e8" stroke="#333" stroke-width="0.9"/><path d="M-8.6 -4.4 Q-4 -5.6 -0.2 -3.8 L-0.2 4.3 Q-4 2.8 -8.6 4 Z" fill="#fff" stroke="#333" stroke-width="0.8"/><path d="M8.6 -4.4 Q4 -5.6 0.2 -3.8 L0.2 4.3 Q4 2.8 8.6 4 Z" fill="#fff" stroke="#333" stroke-width="0.8"/><path d="M-5 3.2L1.6 -5.2L3.4 -3.8L-3.2 4.4Z" fill="#444"/></g><circle cx="416.6" cy="402.8" r="16.1" fill="#3aa3e4" stroke="#7a7a7a" stroke-width="2.1"/><circle cx="416.6" cy="402.8" r="13.6" fill="none" stroke="#e6f6fd" stroke-width="2.0" opacity="0.85"/><ellipse cx="416.6" cy="399.2" rx="12.2" ry="9.0" fill="url(#oh)"/><g transform="translate(416.6,403.0)"><path d="M-9.5 -3.2 L-9.5 4.4 L-0.3 4.9 L9.5 4.4 L9.5 -3.2" fill="#e8e8e8" stroke="#333" stroke-width="0.9"/><path d="M-8.6 -4.4 Q-4 -5.6 -0.2 -3.8 L-0.2 4.3 Q-4 2.8 -8.6 4 Z" fill="#fff" stroke="#333" stroke-width="0.8"/><path d="M8.6 -4.4 Q4 -5.6 0.2 -3.8 L0.2 4.3 Q4 2.8 8.6 4 Z" fill="#fff" stroke="#333" stroke-width="0.8"/><path d="M-5 3.2L2.2 -3.5L4.2 -5.2L5.2 -4.2L-3 4Z" fill="#555"/><circle cx="-4" cy="0.5" r="1.6" fill="#444"/></g><circle cx="416.6" cy="440.0" r="16.1" fill="#e65a2f" stroke="#7a7a7a" stroke-width="2.1"/><circle cx="416.6" cy="440.0" r="13.6" fill="none" stroke="#fbe0d4" stroke-width="2.0" opacity="0.85"/><ellipse cx="416.6" cy="436.4" rx="12.2" ry="9.0" fill="url(#oh)"/><g transform="translate(416.6,440.2)"><path d="M-9.5 -3.2 L-9.5 4.4 L-0.3 4.9 L9.5 4.4 L9.5 -3.2" fill="#e8e8e8" stroke="#333" stroke-width="0.9"/><path d="M-8.6 -4.4 Q-4 -5.6 -0.2 -3.8 L-0.2 4.3 Q-4 2.8 -8.6 4 Z" fill="#fff" stroke="#333" stroke-width="0.8"/><path d="M8.6 -4.4 Q4 -5.6 0.2 -3.8 L0.2 4.3 Q4 2.8 8.6 4 Z" fill="#fff" stroke="#333" stroke-width="0.8"/><rect x="-5.6" y="-2.2" width="2.6" height="4.2" fill="#222"/><path d="M-2.6 0H2.6" stroke="#333" stroke-width="1"/><circle cx="4.3" cy="-0.2" r="1.9" fill="#555"/></g></svg>
</body></html>
